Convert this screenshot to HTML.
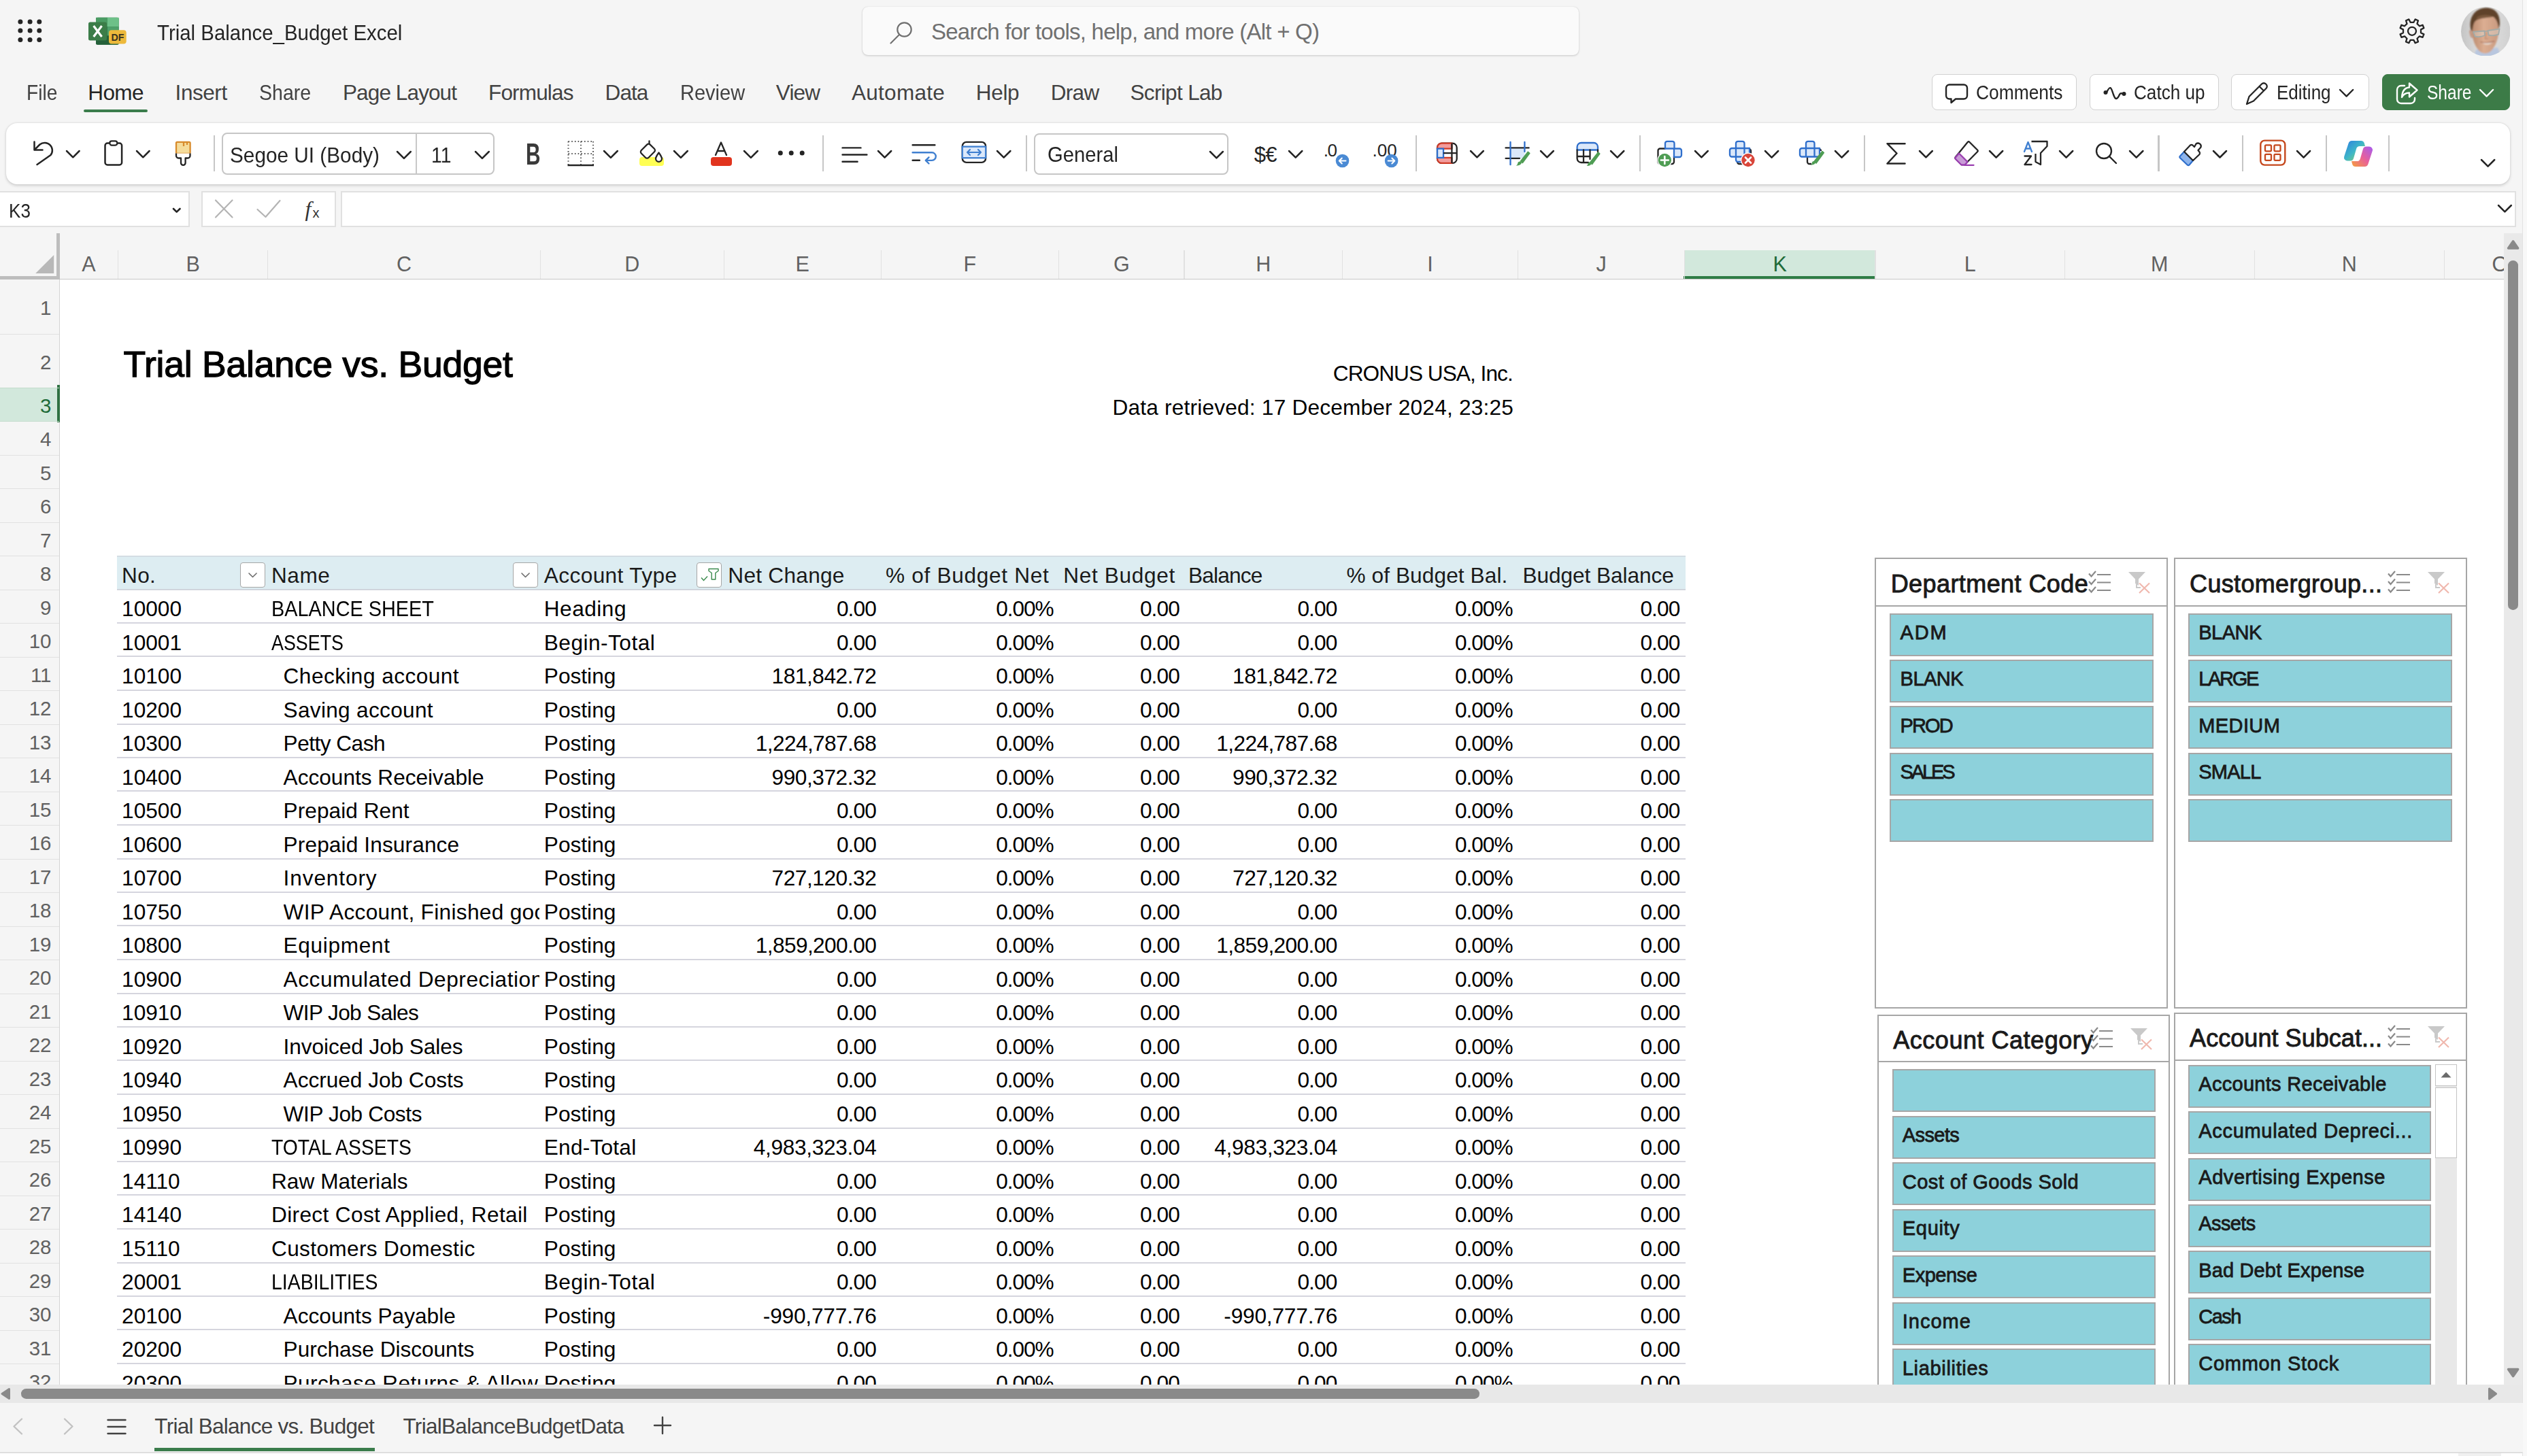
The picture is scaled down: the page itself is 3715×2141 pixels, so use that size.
<!DOCTYPE html>
<html lang="en"><head><meta charset="utf-8"><title>Trial Balance_Budget Excel</title>
<style>
html,body{margin:0;padding:0}
body{width:3715px;height:2141px;overflow:hidden;position:relative;background:#f5f5f5;font-family:"Liberation Sans",sans-serif;color:#242424}
.r{position:absolute;box-sizing:border-box}
.t{position:absolute;white-space:nowrap;color:#242424}
</style></head><body>
<svg class="r" style="left:0.0px;top:0.0px" width="90.0" height="90.0" viewBox="0 0 90.0 90.0"><g fill="#242424"><circle cx="29.9" cy="31.9" r="3.5"/><circle cx="29.9" cy="45.1" r="3.5"/><circle cx="29.9" cy="58.4" r="3.5"/><circle cx="44.1" cy="31.9" r="3.5"/><circle cx="44.1" cy="45.1" r="3.5"/><circle cx="44.1" cy="58.4" r="3.5"/><circle cx="57.8" cy="31.9" r="3.5"/><circle cx="57.8" cy="45.1" r="3.5"/><circle cx="57.8" cy="58.4" r="3.5"/></g></svg>
<svg class="r" style="left:126.0px;top:22.0px" width="64.0" height="48.0" viewBox="0 0 64.0 48.0">
<rect x="15" y="3.8" width="33.7" height="40" rx="2.5" fill="#2f7d4a"/>
<rect x="15" y="3.8" width="17" height="13.5" fill="#4a9b63"/><rect x="32" y="3.8" width="16.7" height="13.5" fill="#6dc088"/>
<rect x="15" y="17.3" width="17" height="13.2" fill="#2f7d4a"/><rect x="32" y="17.3" width="16.7" height="13.2" fill="#4fa06a"/>
<rect x="15" y="30.5" width="33.7" height="13.3" rx="2.5" fill="#25603a"/>
<rect x="4" y="10.6" width="27" height="27" rx="2.5" fill="#3b7d48"/>
<path d="M11.6 16 L23.6 32 M23.6 16 L11.6 32" stroke="#fff" stroke-width="3.2" fill="none"/>
<rect x="34" y="22.2" width="25.7" height="20.3" rx="4" fill="#edb93b"/>
<text x="46.9" y="38" font-family="Liberation Sans,sans-serif" font-weight="bold" font-size="14.5" text-anchor="middle" fill="#3a3320" textLength="19" lengthAdjust="spacingAndGlyphs">DF</text>
</svg>
<div class="t" style="left:231.4px;top:27.8px;font-size:32px;line-height:40px;transform:scaleX(0.9195);transform-origin:0 0;">Trial Balance_Budget Excel</div>
<div class="r" style="left:1268.0px;top:9.8px;width:1053.0px;height:71.7px;background:#fafafa;border-radius:8px;box-shadow:0 1px 3px rgba(0,0,0,.18),0 0 1px rgba(0,0,0,.15);"></div>
<svg class="r" style="left:1306.0px;top:28.0px" width="40.0" height="40.0" viewBox="0 0 40.0 40.0"><circle cx="23.5" cy="15.5" r="10.2" fill="none" stroke="#707070" stroke-width="2.2"/><path d="M16 23 L3.5 35.5" stroke="#707070" stroke-width="2.2" stroke-linecap="round"/></svg>
<div class="t" style="left:1369.0px;top:25.8px;font-size:33px;line-height:42px;letter-spacing:-0.77px;color:#707070;">Search for tools, help, and more (Alt + Q)</div>
<svg class="r" style="left:3520.0px;top:20.0px" width="52.0" height="52.0" viewBox="0 0 52.0 52.0"><path d="M30.6 8.4 L35.0 10.2 L33.5 14.9 L36.9 18.3 L41.6 16.8 L43.4 21.2 L39.0 23.4 L39.0 28.2 L43.4 30.4 L41.6 34.8 L36.9 33.3 L33.5 36.7 L35.0 41.4 L30.6 43.2 L28.4 38.8 L23.6 38.8 L21.4 43.2 L17.0 41.4 L18.5 36.7 L15.1 33.3 L10.4 34.8 L8.6 30.4 L13.0 28.2 L13.0 23.4 L8.6 21.2 L10.4 16.8 L15.1 18.3 L18.5 14.9 L17.0 10.2 L21.4 8.4 L23.6 12.8 L28.4 12.8Z" fill="none" stroke="#242424" stroke-width="2.3" stroke-linejoin="round"/><circle cx="26" cy="25.8" r="6" fill="none" stroke="#242424" stroke-width="2.3"/></svg>
<svg class="r" style="left:3617.8px;top:9.8px" width="72.6" height="72.6" viewBox="0 0 72.6 72.6">
<defs><clipPath id="av"><circle cx="36.3" cy="36.3" r="36.3"/></clipPath>
<linearGradient id="avb" x1="0" x2="1"><stop offset="0" stop-color="#c4c4c4"/><stop offset=".45" stop-color="#e2e2e2"/><stop offset="1" stop-color="#d0d0d0"/></linearGradient>
<linearGradient id="avs" x1="0" x2="1"><stop offset="0" stop-color="#b98a6e"/><stop offset=".45" stop-color="#dcae92"/><stop offset="1" stop-color="#c99a80"/></linearGradient>
<filter id="avf" x="-10%" y="-10%" width="120%" height="120%"><feGaussianBlur stdDeviation="0.9"/></filter></defs>
<g clip-path="url(#av)"><rect width="73" height="73" fill="url(#avb)"/>
<g filter="url(#avf)">
<path d="M18 76 L22 63 L54 60 L60 76Z" fill="#b9c7df"/>
<path d="M13 40 C11.5 35 12.5 33.5 15 34.5 L17 46 C14.5 46 13.5 43 13 40Z" fill="#c3927a"/>
<path d="M15.5 30 C15 18 24 10 36 10.5 C48 11 56 18 55.5 32 C55.5 44 52 58 43 66 C38 70 30 69 26 64 C19 56 16 44 15.5 30Z" fill="url(#avs)"/>
<path d="M14.5 34 C10.5 16 20 2.5 36 1.5 C50 1 58 10 57 26 L55.5 33 C54.5 24 52 17.5 47 14.5 C40 16.5 28 15.5 21 21 C18 24.5 17.5 30 16.5 36Z" fill="#5f422b"/>
<path d="M21 21 C26 14 40 16 47 14.5 C42 11 30 11 24 15Z" fill="#7d5a3d"/>
<path d="M29.5 52 Q38.5 59.5 48 51 Q39 54 29.5 52Z" fill="#f2ebe2"/><path d="M28.5 51.5 Q38.5 55 49 50.5" stroke="#9a5b48" stroke-width="1.1" fill="none"/>
<path d="M37 38 L35.5 47 H40" stroke="#b78469" stroke-width="1.2" fill="none"/>
</g>
<path d="M18 36.8 L34.5 35.5 L35 42 Q27 45.5 20.5 43.5Z M39.5 35 L56.5 32.5 L55 40.5 Q47 43.5 40.5 41.5Z" fill="rgba(225,232,230,.35)" stroke="#a3aaa6" stroke-width="1.9" stroke-linejoin="round"/>
<path d="M34.5 36.5 Q37 35.3 39.5 36" stroke="#a3aaa6" stroke-width="1.6" fill="none"/>
</g></svg>
<div class="t" style="left:39.3px;top:115.8px;font-size:31.5px;line-height:40px;transform:scaleX(0.8927);transform-origin:0 0;color:#424242;">File</div>
<div class="t" style="left:129.3px;top:115.8px;font-size:31.5px;line-height:40px;letter-spacing:-0.61px;">Home</div>
<div class="t" style="left:257.6px;top:115.8px;font-size:31.5px;line-height:40px;letter-spacing:-0.44px;color:#424242;">Insert</div>
<div class="t" style="left:380.8px;top:115.8px;font-size:31.5px;line-height:40px;transform:scaleX(0.9067);transform-origin:0 0;color:#424242;">Share</div>
<div class="t" style="left:504.0px;top:115.8px;font-size:31.5px;line-height:40px;letter-spacing:-0.89px;color:#424242;">Page Layout</div>
<div class="t" style="left:718.0px;top:115.8px;font-size:31.5px;line-height:40px;letter-spacing:-0.83px;color:#424242;">Formulas</div>
<div class="t" style="left:889.6px;top:115.8px;font-size:31.5px;line-height:40px;letter-spacing:-0.92px;color:#424242;">Data</div>
<div class="t" style="left:999.5px;top:115.8px;font-size:31.5px;line-height:40px;transform:scaleX(0.9208);transform-origin:0 0;color:#424242;">Review</div>
<div class="t" style="left:1140.8px;top:115.8px;font-size:31.5px;line-height:40px;letter-spacing:-0.86px;color:#424242;">View</div>
<div class="t" style="left:1252.0px;top:115.8px;font-size:31.5px;line-height:40px;letter-spacing:0.27px;color:#424242;">Automate</div>
<div class="t" style="left:1434.8px;top:115.8px;font-size:31.5px;line-height:40px;letter-spacing:-0.33px;color:#424242;">Help</div>
<div class="t" style="left:1544.7px;top:115.8px;font-size:31.5px;line-height:40px;letter-spacing:-0.66px;color:#424242;">Draw</div>
<div class="t" style="left:1661.5px;top:115.8px;font-size:31.5px;line-height:40px;letter-spacing:-0.66px;color:#424242;">Script Lab</div>
<div class="r" style="left:123.2px;top:161.2px;width:93.7px;height:3.9px;background:#3a7c4b;border-radius:2px;"></div>
<div class="r" style="left:2839.5px;top:109.2px;width:213.2px;height:53.1px;background:#fff;border:1.6px solid #d1d1d1;border-radius:8px;"></div>
<div class="r" style="left:3071.5px;top:109.2px;width:190.1px;height:53.1px;background:#fff;border:1.6px solid #d1d1d1;border-radius:8px;"></div>
<div class="r" style="left:3280.4px;top:109.2px;width:203.0px;height:53.1px;background:#fff;border:1.6px solid #d1d1d1;border-radius:8px;"></div>
<div class="r" style="left:3501.8px;top:109.2px;width:188.4px;height:53.1px;background:#3c7b47;border:1.6px solid #3c7b47;border-radius:8px;"></div>
<svg class="r" style="left:2858.0px;top:120.0px" width="40.0" height="36.0" viewBox="0 0 40.0 36.0"><path d="M8 4.5 H29 a5 5 0 0 1 5 5 V20.5 a5 5 0 0 1 -5 5 H17 L10.5 31 V25.5 H8 a5 5 0 0 1 -5 -5 V9.5 a5 5 0 0 1 5 -5Z" fill="none" stroke="#242424" stroke-width="2.4" stroke-linejoin="round"/></svg>
<div class="t" style="left:2905.0px;top:116.8px;font-size:30px;line-height:38px;transform:scaleX(0.8790);transform-origin:0 0;">Comments</div>
<svg class="r" style="left:3090.0px;top:122.0px" width="40.0" height="30.0" viewBox="0 0 40.0 30.0"><circle cx="5.5" cy="14" r="3" fill="#242424"/><circle cx="32.5" cy="16" r="3" fill="#242424"/><path d="M7 14 C13 1 14 9 17 17 C20 26 23 24 26 17 C27.5 14 30 15.5 31.5 16" fill="none" stroke="#242424" stroke-width="2.4" stroke-linecap="round"/></svg>
<div class="t" style="left:3137.0px;top:116.8px;font-size:30px;line-height:38px;transform:scaleX(0.8704);transform-origin:0 0;">Catch up</div>
<svg class="r" style="left:3299.0px;top:118.0px" width="40.0" height="40.0" viewBox="0 0 40.0 40.0"><path d="M4 35 L7.5 24 L26 5.5 a4.2 4.2 0 0 1 6 0 l0.5 0.5 a4.2 4.2 0 0 1 0 6 L14 30.5 Z M22.5 9 L29 15.5" fill="none" stroke="#242424" stroke-width="2.3" stroke-linejoin="round" stroke-linecap="round"/></svg>
<div class="t" style="left:3346.7px;top:116.8px;font-size:30px;line-height:38px;transform:scaleX(0.8677);transform-origin:0 0;">Editing</div>
<svg class="r" style="left:3437.1px;top:129.3px" width="25.2" height="15.6" viewBox="0 0 25.2 15.6"><path d="M3 3 L12.6 12.6 L22.2 3" fill="none" stroke="#242424" stroke-width="2.4" stroke-linecap="round" stroke-linejoin="round"/></svg>
<svg class="r" style="left:3520.0px;top:118.0px" width="40.0" height="40.0" viewBox="0 0 40.0 40.0"><path d="M15 8 H10 a6 6 0 0 0 -6 6 V28 a6 6 0 0 0 6 6 H24 a6 6 0 0 0 6 -6 V26" fill="none" stroke="#fff" stroke-width="2.4" stroke-linecap="round"/><path d="M22 4.5 L33.5 14.5 L22 24.5 V18.5 C16 18.5 13 21 11 25 C11.5 17 15 11 22 10.5Z" fill="none" stroke="#fff" stroke-width="2.4" stroke-linejoin="round"/></svg>
<div class="t" style="left:3568.0px;top:116.8px;font-size:30px;line-height:38px;transform:scaleX(0.8183);transform-origin:0 0;color:#fff;">Share</div>
<svg class="r" style="left:3643.3px;top:129.3px" width="25.1" height="15.6" viewBox="0 0 25.1 15.6"><path d="M3 3 L12.6 12.6 L22.1 3" fill="none" stroke="#fff" stroke-width="2.4" stroke-linecap="round" stroke-linejoin="round"/></svg>
<div class="r" style="left:9.3px;top:181.2px;width:3681.0px;height:89.6px;background:#fff;border-radius:16px;box-shadow:0 1.5px 4px rgba(0,0,0,.16),0 0 2px rgba(0,0,0,.10);"></div>
<div class="r" style="left:314.0px;top:199.4px;width:2.4px;height:53.0px;background:#c6c6c6;"></div>
<div class="r" style="left:1208.6px;top:199.4px;width:2.4px;height:53.0px;background:#c6c6c6;"></div>
<div class="r" style="left:1507.8px;top:199.4px;width:2.4px;height:53.0px;background:#c6c6c6;"></div>
<div class="r" style="left:2080.8px;top:199.4px;width:2.4px;height:53.0px;background:#c6c6c6;"></div>
<div class="r" style="left:2409.5px;top:199.4px;width:2.4px;height:53.0px;background:#c6c6c6;"></div>
<div class="r" style="left:2740.1px;top:199.4px;width:2.4px;height:53.0px;background:#c6c6c6;"></div>
<div class="r" style="left:3172.3px;top:199.4px;width:2.4px;height:53.0px;background:#c6c6c6;"></div>
<div class="r" style="left:3295.8px;top:199.4px;width:2.4px;height:53.0px;background:#c6c6c6;"></div>
<div class="r" style="left:3418.8px;top:199.4px;width:2.4px;height:53.0px;background:#c6c6c6;"></div>
<div class="r" style="left:3510.8px;top:199.4px;width:2.4px;height:53.0px;background:#c6c6c6;"></div>
<svg class="r" style="left:95.1px;top:218.9px" width="24.6" height="15.3" viewBox="0 0 24.6 15.3"><path d="M3 3 L12.3 12.3 L21.6 3" fill="none" stroke="#242424" stroke-width="2.5" stroke-linecap="round" stroke-linejoin="round"/></svg>
<svg class="r" style="left:198.1px;top:218.9px" width="24.6" height="15.3" viewBox="0 0 24.6 15.3"><path d="M3 3 L12.3 12.3 L21.6 3" fill="none" stroke="#242424" stroke-width="2.5" stroke-linecap="round" stroke-linejoin="round"/></svg>
<svg class="r" style="left:885.1px;top:218.7px" width="25.8" height="15.9" viewBox="0 0 25.8 15.9"><path d="M3 3 L12.9 12.9 L22.8 3" fill="none" stroke="#242424" stroke-width="2.5" stroke-linecap="round" stroke-linejoin="round"/></svg>
<svg class="r" style="left:988.1px;top:218.7px" width="25.8" height="15.9" viewBox="0 0 25.8 15.9"><path d="M3 3 L12.9 12.9 L22.8 3" fill="none" stroke="#242424" stroke-width="2.5" stroke-linecap="round" stroke-linejoin="round"/></svg>
<svg class="r" style="left:1091.1px;top:218.6px" width="25.8" height="15.9" viewBox="0 0 25.8 15.9"><path d="M3 3 L12.9 12.9 L22.8 3" fill="none" stroke="#242424" stroke-width="2.5" stroke-linecap="round" stroke-linejoin="round"/></svg>
<svg class="r" style="left:1287.7px;top:218.8px" width="25.2" height="15.6" viewBox="0 0 25.2 15.6"><path d="M3 3 L12.6 12.6 L22.2 3" fill="none" stroke="#242424" stroke-width="2.5" stroke-linecap="round" stroke-linejoin="round"/></svg>
<svg class="r" style="left:1462.8px;top:218.7px" width="25.4" height="15.7" viewBox="0 0 25.4 15.7"><path d="M3 3 L12.7 12.7 L22.4 3" fill="none" stroke="#242424" stroke-width="2.5" stroke-linecap="round" stroke-linejoin="round"/></svg>
<svg class="r" style="left:1892.1px;top:218.8px" width="25.3" height="15.7" viewBox="0 0 25.3 15.7"><path d="M3 3 L12.7 12.7 L22.3 3" fill="none" stroke="#242424" stroke-width="2.5" stroke-linecap="round" stroke-linejoin="round"/></svg>
<svg class="r" style="left:2159.1px;top:218.9px" width="24.8" height="15.4" viewBox="0 0 24.8 15.4"><path d="M3 3 L12.4 12.4 L21.8 3" fill="none" stroke="#242424" stroke-width="2.5" stroke-linecap="round" stroke-linejoin="round"/></svg>
<svg class="r" style="left:2262.1px;top:218.9px" width="24.8" height="15.4" viewBox="0 0 24.8 15.4"><path d="M3 3 L12.4 12.4 L21.8 3" fill="none" stroke="#242424" stroke-width="2.5" stroke-linecap="round" stroke-linejoin="round"/></svg>
<svg class="r" style="left:2364.6px;top:218.8px" width="25.3" height="15.7" viewBox="0 0 25.3 15.7"><path d="M3 3 L12.7 12.7 L22.3 3" fill="none" stroke="#242424" stroke-width="2.5" stroke-linecap="round" stroke-linejoin="round"/></svg>
<svg class="r" style="left:2489.1px;top:218.9px" width="24.8" height="15.4" viewBox="0 0 24.8 15.4"><path d="M3 3 L12.4 12.4 L21.8 3" fill="none" stroke="#242424" stroke-width="2.5" stroke-linecap="round" stroke-linejoin="round"/></svg>
<svg class="r" style="left:2591.7px;top:218.8px" width="25.2" height="15.6" viewBox="0 0 25.2 15.6"><path d="M3 3 L12.6 12.6 L22.2 3" fill="none" stroke="#242424" stroke-width="2.5" stroke-linecap="round" stroke-linejoin="round"/></svg>
<svg class="r" style="left:2694.7px;top:218.8px" width="25.2" height="15.6" viewBox="0 0 25.2 15.6"><path d="M3 3 L12.6 12.6 L22.2 3" fill="none" stroke="#242424" stroke-width="2.5" stroke-linecap="round" stroke-linejoin="round"/></svg>
<svg class="r" style="left:2819.1px;top:218.9px" width="24.8" height="15.4" viewBox="0 0 24.8 15.4"><path d="M3 3 L12.4 12.4 L21.8 3" fill="none" stroke="#242424" stroke-width="2.5" stroke-linecap="round" stroke-linejoin="round"/></svg>
<svg class="r" style="left:2921.7px;top:218.8px" width="25.2" height="15.6" viewBox="0 0 25.2 15.6"><path d="M3 3 L12.6 12.6 L22.2 3" fill="none" stroke="#242424" stroke-width="2.5" stroke-linecap="round" stroke-linejoin="round"/></svg>
<svg class="r" style="left:3024.7px;top:218.8px" width="25.2" height="15.6" viewBox="0 0 25.2 15.6"><path d="M3 3 L12.6 12.6 L22.2 3" fill="none" stroke="#242424" stroke-width="2.5" stroke-linecap="round" stroke-linejoin="round"/></svg>
<svg class="r" style="left:3127.9px;top:218.7px" width="25.4" height="15.7" viewBox="0 0 25.4 15.7"><path d="M3 3 L12.7 12.7 L22.4 3" fill="none" stroke="#242424" stroke-width="2.5" stroke-linecap="round" stroke-linejoin="round"/></svg>
<svg class="r" style="left:3250.9px;top:218.8px" width="25.0" height="15.5" viewBox="0 0 25.0 15.5"><path d="M3 3 L12.5 12.5 L22.0 3" fill="none" stroke="#242424" stroke-width="2.5" stroke-linecap="round" stroke-linejoin="round"/></svg>
<svg class="r" style="left:3374.1px;top:218.8px" width="25.1" height="15.6" viewBox="0 0 25.1 15.6"><path d="M3 3 L12.6 12.6 L22.1 3" fill="none" stroke="#242424" stroke-width="2.5" stroke-linecap="round" stroke-linejoin="round"/></svg>
<svg class="r" style="left:3645.1px;top:232.3px" width="25.2" height="15.6" viewBox="0 0 25.2 15.6"><path d="M3 3 L12.6 12.6 L22.2 3" fill="none" stroke="#242424" stroke-width="2.5" stroke-linecap="round" stroke-linejoin="round"/></svg>
<svg class="r" style="left:44.0px;top:203.0px" width="40.0" height="44.0" viewBox="0 0 40.0 44.0"><path d="M6.5 5.5 V17.5 H18.5" fill="none" stroke="#242424" stroke-width="2.5" stroke-linecap="round" stroke-linejoin="round"/><path d="M7 17 L14.5 9.5 a11.2 11.2 0 0 1 16 15.5 L10.5 39" fill="none" stroke="#242424" stroke-width="2.5" stroke-linecap="round" stroke-linejoin="round"/></svg>
<svg class="r" style="left:150.0px;top:204.0px" width="34.0" height="42.0" viewBox="0 0 34.0 42.0"><rect x="4.5" y="6.5" width="24.6" height="32" rx="3.5" fill="none" stroke="#242424" stroke-width="2.5"/><rect x="11.3" y="3.4" width="11" height="6.2" rx="3" fill="#fff" stroke="#242424" stroke-width="2.2"/></svg>
<svg class="r" style="left:255.0px;top:205.0px" width="30.0" height="42.0" viewBox="0 0 30.0 42.0"><rect x="4" y="3.8" width="20.6" height="17" rx="1.5" fill="#f5dc9b" stroke="#d88b2c" stroke-width="2.3"/><path d="M15 4 V10 M20 4 V8" stroke="#d88b2c" stroke-width="2.3"/><path d="M4 20.5 V24 a3.5 3.5 0 0 0 3.5 3.5 H11 V34.5 a3.3 3.3 0 0 0 6.6 0 V27.5 H21 a3.5 3.5 0 0 0 3.5 -3.5 V20.5" fill="#fff" stroke="#242424" stroke-width="2.3" stroke-linejoin="round"/></svg>
<div class="r" style="left:326.3px;top:195.2px;width:401.0px;height:62.0px;background:#fff;border:2px solid #c6c6c6;border-radius:8px;"></div>
<div class="r" style="left:610.8px;top:196.0px;width:1.8px;height:60.4px;background:#c8c8c8;"></div>
<div class="t" style="left:338.0px;top:207.8px;font-size:32px;line-height:40px;transform:scaleX(0.9299);transform-origin:0 0;">Segoe UI (Body)</div>
<svg class="r" style="left:581.1px;top:220.2px" width="25.8" height="15.9" viewBox="0 0 25.8 15.9"><path d="M3 3 L12.9 12.9 L22.8 3" fill="none" stroke="#242424" stroke-width="2.5" stroke-linecap="round" stroke-linejoin="round"/></svg>
<div class="t" style="left:634.0px;top:207.8px;font-size:32px;line-height:40px;transform:scaleX(0.8851);transform-origin:0 0;">11</div>
<svg class="r" style="left:696.1px;top:220.2px" width="25.8" height="15.9" viewBox="0 0 25.8 15.9"><path d="M3 3 L12.9 12.9 L22.8 3" fill="none" stroke="#242424" stroke-width="2.5" stroke-linecap="round" stroke-linejoin="round"/></svg>
<div class="t" style="left:773.0px;top:199.3px;font-size:44.5px;line-height:56px;transform:scaleX(0.6692);transform-origin:0 0;color:#3a3a3a;font-weight:bold;">B</div>
<svg class="r" style="left:832.0px;top:204.0px" width="44.0" height="44.0" viewBox="0 0 44.0 44.0"><g stroke="#555" stroke-width="2" stroke-dasharray="1.6 3.1" fill="none"><path d="M3.5 4 H40.5 M3.5 22 H40.5 M3.5 4 V38 M22 4 V38 M40 4 V38"/></g><path d="M2.5 39 H41" stroke="#242424" stroke-width="2.5"/></svg>
<div class="r" style="left:940.0px;top:231.0px;width:36.0px;height:13.0px;background:#ffff54;border-radius:4px;"></div>
<svg class="r" style="left:938.0px;top:204.0px" width="42.0" height="44.0" viewBox="0 0 42.0 44.0"><path d="M16.5 3.5 V17" stroke="#242424" stroke-width="2.3" stroke-linecap="round" fill="none"/><path d="M13.2 8.6 L4.8 17 a3.2 3.2 0 0 0 0 4.5 L11 27.7 a3.2 3.2 0 0 0 4.5 0 L24 19.3 a3.2 3.2 0 0 0 0 -4.5 L17.7 8.6 a3.2 3.2 0 0 0 -4.5 0Z" fill="#fff" stroke="#242424" stroke-width="2.3" stroke-linejoin="round"/><path d="M30.5 20.5 C28 24 26 27 26 29.3 a4.5 4.5 0 0 0 9 0 C35 27 33 24 30.5 20.5Z" fill="#fff" stroke="#242424" stroke-width="2.3" stroke-linejoin="round"/></svg>
<div class="r" style="left:1044.7px;top:231.0px;width:31.3px;height:13.0px;background:#e1341e;border-radius:4px;"></div>
<svg class="r" style="left:1046.0px;top:205.0px" width="30.0" height="28.0" viewBox="0 0 30.0 28.0"><path d="M6 23 L14 4.5 L22 23 M8.8 17 H19.2" fill="none" stroke="#242424" stroke-width="2.3" stroke-linecap="round" stroke-linejoin="round"/></svg>
<svg class="r" style="left:1140.0px;top:215.0px" width="46.0" height="20.0" viewBox="0 0 46.0 20.0"><g fill="#242424"><circle cx="7.3" cy="10" r="3.5"/><circle cx="23.2" cy="10" r="3.5"/><circle cx="39.2" cy="10" r="3.5"/></g></svg>
<svg class="r" style="left:1236.0px;top:210.0px" width="42.0" height="34.0" viewBox="0 0 42.0 34.0"><path d="M2.5 7.4 H29.5 M2.5 17.5 H38.4 M2.5 27.7 H24.6" stroke="#242424" stroke-width="2.4" stroke-linecap="round" fill="none"/></svg>
<svg class="r" style="left:1339.0px;top:207.0px" width="42.0" height="36.0" viewBox="0 0 42.0 36.0"><path d="M2.6 6.2 H35.4 M2.6 28.8 H12.9" stroke="#242424" stroke-width="2.4" stroke-linecap="round" fill="none"/><path d="M2.6 17.3 H31 a5.8 5.8 0 0 1 0 11.6 H22.5 M26.5 24.3 L21.8 28.9 L26.5 33.5" stroke="#3f7fd0" stroke-width="2.4" stroke-linecap="round" stroke-linejoin="round" fill="none"/></svg>
<svg class="r" style="left:1411.0px;top:205.0px" width="42.0" height="38.0" viewBox="0 0 42.0 38.0"><rect x="3.8" y="3.9" width="34.3" height="30" rx="6" fill="#fff" stroke="#242424" stroke-width="2.4"/><rect x="3.8" y="10.6" width="34.3" height="16.6" fill="#dbe8fa" stroke="#3f7fd0" stroke-width="2.3"/><path d="M11 19 H31 M15 15 L11 19 L15 23 M27 15 L31 19 L27 23" fill="none" stroke="#3f7fd0" stroke-width="2.2" stroke-linecap="round" stroke-linejoin="round"/></svg>
<div class="r" style="left:1520.0px;top:196.0px;width:286.3px;height:61.0px;background:#fff;border:2px solid #c6c6c6;border-radius:8px;"></div>
<div class="t" style="left:1540.0px;top:206.6px;font-size:32px;line-height:40px;transform:scaleX(0.9126);transform-origin:0 0;">General</div>
<svg class="r" style="left:1776.1px;top:220.4px" width="24.8" height="15.4" viewBox="0 0 24.8 15.4"><path d="M3 3 L12.4 12.4 L21.8 3" fill="none" stroke="#242424" stroke-width="2.5" stroke-linecap="round" stroke-linejoin="round"/></svg>
<div class="t" style="left:1843.8px;top:208.3px;font-size:31px;line-height:39px;letter-spacing:-0.87px;">$€</div>
<div class="t" style="left:1945.8px;top:204.9px;font-size:26px;line-height:33px;letter-spacing:-1.48px;">.0</div>
<svg class="r" style="left:1962.0px;top:225.0px" width="24.0" height="24.0" viewBox="0 0 24.0 24.0"><circle cx="11.5" cy="11.5" r="9.8" fill="#4a8ad4"/><path d="M16.5 11.5 H7 M10.8 7.5 L6.8 11.5 L10.8 15.5" fill="none" stroke="#fff" stroke-width="2" stroke-linecap="round" stroke-linejoin="round"/></svg>
<div class="t" style="left:2017.6px;top:204.9px;font-size:26px;line-height:33px;letter-spacing:-0.02px;">.00</div>
<svg class="r" style="left:2034.0px;top:225.0px" width="24.0" height="24.0" viewBox="0 0 24.0 24.0"><circle cx="11.6" cy="11.5" r="9.8" fill="#4a8ad4"/><path d="M6.6 11.5 H16 M12.3 7.5 L16.3 11.5 L12.3 15.5" fill="none" stroke="#fff" stroke-width="2" stroke-linecap="round" stroke-linejoin="round"/></svg>
<svg class="r" style="left:2109.0px;top:206.0px" width="38.0" height="38.0" viewBox="0 0 38.0 38.0"><rect x="4" y="4.6" width="28.7" height="29.3" rx="6.5" fill="#fff" stroke="#242424" stroke-width="2.3"/><path d="M4 12.6 V11.1 a6.5 6.5 0 0 1 6.5 -6.5 H25.4 V12.6Z M4 25.9 H25.4 V33.9 H10.5 a6.5 6.5 0 0 1 -6.5 -6.5Z" fill="#f29c9c" stroke="#cf3a26" stroke-width="2.3" stroke-linejoin="round"/><rect x="4" y="12.6" width="9" height="13.3" fill="#dbe8fa" stroke="#2f6fcc" stroke-width="2.3"/><path d="M25.4 4.6 V33.9 M13 19.2 H32.7" stroke="#242424" stroke-width="2.3" fill="none"/></svg>
<svg class="r" style="left:2210.0px;top:204.0px" width="42.0" height="44.0" viewBox="0 0 42.0 44.0"><rect x="10.5" y="13.4" width="20.9" height="15.4" fill="#dbe8fa"/><path d="M3.5 13.4 H37.6 M3.5 28.8 H24" stroke="#242424" stroke-width="2.3" stroke-linecap="round"/><path d="M10.5 4.8 V38.2 M31.4 4.8 V19" stroke="#2f6fcc" stroke-width="2.3" stroke-linecap="round"/><path d="M25.5 33 L36.3 19.3 L38.8 21.3 L28.3 35.5 Z" fill="#4f9d54" stroke="#4f9d54" stroke-width="1.6" stroke-linejoin="round"/><path d="M18.5 39.5 C21.5 39.8 26.2 39 27 35.3 C25.5 32.5 21.5 33 21.2 36.3 C21.1 37.8 20 39 18.5 39.5Z" fill="#4f9d54"/></svg>
<svg class="r" style="left:2315.0px;top:206.0px" width="40.0" height="42.0" viewBox="0 0 40.0 42.0"><path d="M3.6 14.5 V10 a6 6 0 0 1 6 -6 H28 a6 6 0 0 1 6 6 V14.5Z" fill="#dbe8fa" stroke="#2f6fcc" stroke-width="2.3" stroke-linejoin="round"/><path d="M3.6 14.5 V27 a6 6 0 0 0 6 6 H20 M3.6 24 H22 M13 14.5 V33 M22.5 14.5 V28 M34 14.5 V18" fill="none" stroke="#242424" stroke-width="2.3" stroke-linecap="round"/><path d="M22.5 33 L34.5 18 L36.8 20 L25.5 35.5 Z" fill="#4f9d54" stroke="#4f9d54" stroke-width="1.6" stroke-linejoin="round"/><path d="M17.5 38 C20 38.3 24 37.5 24.5 34 C23 31.5 19.5 32 19.3 35 C19.2 36.5 18.5 37.5 17.5 38Z" fill="#4f9d54"/></svg>
<svg class="r" style="left:2434.0px;top:204.0px" width="46.0" height="46.0" viewBox="0 0 46.0 46.0"><path d="M14.5 14.5 H6.5 a3 3 0 0 0 -3 3 V34 a3 3 0 0 0 3 3 H24 a3 3 0 0 0 3 -3 V26" fill="none" stroke="#242424" stroke-width="2.3"/><path d="M17 3.8 h7.5 a3 3 0 0 1 3 3 V14.5 H35 a3 3 0 0 1 3 3 V24 a3 3 0 0 1 -3 3 H27 V14.5 H14 V6.8 a3 3 0 0 1 3 -3Z" fill="#dbe8fa" stroke="#2f6fcc" stroke-width="2.3" stroke-linejoin="round"/><circle cx="13.3" cy="31.5" r="10.3" fill="#4f9d54" stroke="#fff" stroke-width="1.2"/><path d="M13.3 26 V37 M7.8 31.5 H18.8" stroke="#fff" stroke-width="2.6" stroke-linecap="round"/></svg>
<svg class="r" style="left:2540.0px;top:204.0px" width="46.0" height="46.0" viewBox="0 0 46.0 46.0"><path d="M14 22 V34 a3 3 0 0 0 3 3 H31 a3 3 0 0 0 3 -3 V18 a3 3 0 0 0 -3 -3 H26" fill="none" stroke="#242424" stroke-width="2.3"/><path d="M15 3.8 h6.5 a3 3 0 0 1 3 3 V14 H32 V26.5 H24.5 V34 H15 a3 3 0 0 1 -3 -3 V26.5 H6 a3 3 0 0 1 -3 -3 V17 a3 3 0 0 1 3 -3 H12 V6.8 a3 3 0 0 1 3 -3Z M12 14 H24.5 M12 26.5 H24.5 M12 14 V26.5 M24.5 14 V26.5" fill="#dbe8fa" stroke="#2f6fcc" stroke-width="2.3" stroke-linejoin="round"/><circle cx="30" cy="31.5" r="10.3" fill="#d9463a" stroke="#fff" stroke-width="1.2"/><path d="M26 27.5 L34 35.5 M34 27.5 L26 35.5" stroke="#fff" stroke-width="2.6" stroke-linecap="round"/></svg>
<svg class="r" style="left:2643.0px;top:204.0px" width="44.0" height="46.0" viewBox="0 0 44.0 46.0"><path d="M14 22 V34 a3 3 0 0 0 3 3 H20 M26 15 H31 a3 3 0 0 1 3 3" fill="none" stroke="#242424" stroke-width="2.3"/><path d="M15 3.8 h6.5 a3 3 0 0 1 3 3 V14 H32 V26.5 H24.5 H12 H6 a3 3 0 0 1 -3 -3 V17 a3 3 0 0 1 3 -3 H12 V6.8 a3 3 0 0 1 3 -3Z M12 14 H24.5 M12 14 V26.5 M24.5 14 V26.5" fill="#dbe8fa" stroke="#2f6fcc" stroke-width="2.3" stroke-linejoin="round"/><path d="M24 33.5 L36 18.5 L38.3 20.5 L27 36 Z" fill="#4f9d54" stroke="#4f9d54" stroke-width="1.6" stroke-linejoin="round"/><path d="M19 38.5 C21.5 38.8 25.5 38 26 34.5 C24.5 32 21 32.5 20.8 35.5 C20.7 37 20 38 19 38.5Z" fill="#4f9d54"/></svg>
<svg class="r" style="left:2770.0px;top:206.0px" width="36.0" height="40.0" viewBox="0 0 36.0 40.0"><path d="M30.5 5.2 H4.5 L18.5 19.5 L4.5 34.5 H30.5" fill="none" stroke="#242424" stroke-width="2.5" stroke-linecap="round" stroke-linejoin="round"/></svg>
<svg class="r" style="left:2870.0px;top:204.0px" width="42.0" height="44.0" viewBox="0 0 42.0 44.0"><path d="M25.5 5 L37 16.5 a2 2 0 0 1 0 2.8 L18.5 38 H13.5 L5 29.5 a2 2 0 0 1 0 -2.8 L22.7 5 a2 2 0 0 1 2.8 0Z" fill="#fff" stroke="#242424" stroke-width="2.3" stroke-linejoin="round"/><path d="M10 21.5 L22.5 34 L18.5 38.5 H13.5 L5 30 a2 2 0 0 1 0 -2.8Z" fill="#c89bd6" stroke="#9a3fb0" stroke-width="2.3" stroke-linejoin="round"/><path d="M18.5 38.8 H31.5" stroke="#9a3fb0" stroke-width="2.3" stroke-linecap="round"/></svg>
<svg class="r" style="left:2972.0px;top:204.0px" width="44.0" height="44.0" viewBox="0 0 44.0 44.0"><path d="M14.5 4 H37.5 V11 L28 21 V38 L20.5 34 V22" fill="none" stroke="#242424" stroke-width="2.3" stroke-linejoin="round"/><path d="M4 19 L9.5 5 L15 19 M5.8 14.5 H13.2" fill="none" stroke="#3f7fd0" stroke-width="2.3" stroke-linecap="round" stroke-linejoin="round"/><path d="M4.5 25.5 H14 L4.5 38 H14.5" fill="none" stroke="#242424" stroke-width="2.3" stroke-linecap="round" stroke-linejoin="round"/></svg>
<svg class="r" style="left:3078.0px;top:206.0px" width="38.0" height="40.0" viewBox="0 0 38.0 40.0"><circle cx="15" cy="16" r="11" fill="none" stroke="#242424" stroke-width="2.4"/><path d="M23 24 L33 34" stroke="#242424" stroke-width="2.4" stroke-linecap="round"/></svg>
<svg class="r" style="left:3200.0px;top:205.0px" width="40.0" height="42.0" viewBox="0 0 40.0 42.0"><path d="M5 24.5 L11 18 L24 31 L18.5 37.5 a2 2 0 0 1 -2.8 0 L5 27.2 a2 2 0 0 1 0 -2.7Z" fill="#8db4ec" stroke="#2f6fcc" stroke-width="2.2" stroke-linejoin="round"/><path d="M11 18 L20 8.5 a3 3 0 0 1 3.5 0 L26 11 L28.5 6.5 a4.5 4.5 0 0 1 7 5 L31.5 16 L33.5 18.5 a3 3 0 0 1 0 3.5 L24 31Z" fill="#fff" stroke="#242424" stroke-width="2.3" stroke-linejoin="round"/></svg>
<svg class="r" style="left:3320.0px;top:203.0px" width="44.0" height="44.0" viewBox="0 0 44.0 44.0"><rect x="3.3" y="3.6" width="36" height="36" rx="6" fill="none" stroke="#c5481d" stroke-width="2.4"/><g fill="none" stroke="#c5481d" stroke-width="2.3"><rect x="10" y="10.3" width="9" height="9" rx="1.5"/><rect x="23.5" y="10.3" width="9" height="9" rx="1.5"/><rect x="10" y="23.8" width="9" height="9" rx="1.5"/><rect x="23.5" y="23.8" width="9" height="9" rx="1.5"/></g></svg>
<svg class="r" style="left:3444.0px;top:204.0px" width="46.0" height="44.0" viewBox="0 0 46.0 44.0"><defs><linearGradient id="cp1" x1="0" y1="0" x2="1" y2="1"><stop offset="0" stop-color="#2a7de1"/><stop offset=".5" stop-color="#3fb7c7"/><stop offset="1" stop-color="#a4d64a"/></linearGradient>
<linearGradient id="cp2" x1="1" y1="0" x2="0" y2="1"><stop offset="0" stop-color="#a55cf0"/><stop offset=".5" stop-color="#e8609a"/><stop offset="1" stop-color="#f6a03a"/></linearGradient></defs>
<path d="M14 3 H27 a5 5 0 0 1 4.8 3.5 L33 11 H25 a5 5 0 0 0 -4.8 3.6 L16 29 a5 5 0 0 1 -4.8 3.6 H7 a5 5 0 0 1 -4.8 -6.4 L8.5 7 A5.5 5.5 0 0 1 14 3Z" fill="url(#cp1)"/>
<path d="M32 41 H19 a5 5 0 0 1 -4.8 -3.5 L13 33 H21 a5 5 0 0 0 4.8 -3.6 L30 15 a5 5 0 0 1 4.8 -3.6 H39 a5 5 0 0 1 4.8 6.4 L37.5 37 A5.5 5.5 0 0 1 32 41Z" fill="url(#cp2)"/></svg>
<div class="r" style="left:0.0px;top:281.0px;width:278.5px;height:53.0px;background:#fff;border:2px solid #e0e0e0;border-left:0;"></div>
<div class="r" style="left:295.6px;top:281.0px;width:198.4px;height:53.0px;background:#fff;border:2px solid #e0e0e0;"></div>
<div class="r" style="left:501.2px;top:281.0px;width:3197.6px;height:53.0px;background:#fff;border:2px solid #e0e0e0;"></div>
<div class="t" style="left:12.8px;top:290.9px;font-size:29.5px;line-height:37px;transform:scaleX(0.8842);transform-origin:0 0;">K3</div>
<svg class="r" style="left:252.1px;top:304.2px" width="15.5" height="10.7" viewBox="0 0 15.5 10.7"><path d="M3 3 L7.7 7.7 L12.5 3" fill="none" stroke="#242424" stroke-width="2.6" stroke-linecap="round" stroke-linejoin="round"/></svg>
<svg class="r" style="left:312.0px;top:290.0px" width="34.0" height="34.0" viewBox="0 0 34.0 34.0"><path d="M5 4.5 L29.5 29.5 M29.5 4.5 L5 29.5" stroke="#b4b4b4" stroke-width="2.2" stroke-linecap="round"/></svg>
<svg class="r" style="left:374.0px;top:290.0px" width="42.0" height="34.0" viewBox="0 0 42.0 34.0"><path d="M4.5 18 L16.5 29 L37.5 5" fill="none" stroke="#b4b4b4" stroke-width="2.2" stroke-linecap="round" stroke-linejoin="round"/></svg>
<div class="t" style="left:448.5px;top:289px;font-family:'Liberation Serif',serif;font-style:italic;font-size:32px;line-height:36px;color:#333">f</div>
<div class="t" style="left:459.5px;top:301px;font-size:20px;line-height:24px;color:#333">x</div>
<svg class="r" style="left:3670.1px;top:299.4px" width="24.8" height="15.4" viewBox="0 0 24.8 15.4"><path d="M3 3 L12.4 12.4 L21.8 3" fill="none" stroke="#242424" stroke-width="2.5" stroke-linecap="round" stroke-linejoin="round"/></svg>
<div class="r" style="left:87.3px;top:410.5px;width:3593.7px;height:1625.5px;background:#fff;"></div>
<div class="r" style="left:2476.5px;top:367.5px;width:280.5px;height:43.0px;background:#d2e8dc;"></div>
<div class="r" style="left:2474.5px;top:406.0px;width:283.3px;height:4.6px;background:#2f7d46;"></div>
<div class="t" style="left:120.3px;top:369.1px;font-size:30.5px;line-height:39px;color:#616161;">A</div>
<div class="r" style="left:172.9px;top:368.0px;width:1.4px;height:42.0px;background:#e1e1e1;"></div>
<div class="t" style="left:273.4px;top:369.1px;font-size:30.5px;line-height:39px;color:#616161;">B</div>
<div class="r" style="left:392.8px;top:368.0px;width:1.4px;height:42.0px;background:#e1e1e1;"></div>
<div class="t" style="left:582.9px;top:369.1px;font-size:30.5px;line-height:39px;color:#616161;">C</div>
<div class="r" style="left:793.6px;top:368.0px;width:1.4px;height:42.0px;background:#e1e1e1;"></div>
<div class="t" style="left:918.2px;top:369.1px;font-size:30.5px;line-height:39px;color:#616161;">D</div>
<div class="r" style="left:1063.5px;top:368.0px;width:1.4px;height:42.0px;background:#e1e1e1;"></div>
<div class="t" style="left:1169.6px;top:369.1px;font-size:30.5px;line-height:39px;color:#616161;">E</div>
<div class="r" style="left:1294.7px;top:368.0px;width:1.4px;height:42.0px;background:#e1e1e1;"></div>
<div class="t" style="left:1416.6px;top:369.1px;font-size:30.5px;line-height:39px;color:#616161;">F</div>
<div class="r" style="left:1555.8px;top:368.0px;width:1.4px;height:42.0px;background:#e1e1e1;"></div>
<div class="t" style="left:1636.9px;top:369.1px;font-size:30.5px;line-height:39px;color:#616161;">G</div>
<div class="r" style="left:1740.3px;top:368.0px;width:1.4px;height:42.0px;background:#e1e1e1;"></div>
<div class="t" style="left:1846.2px;top:369.1px;font-size:30.5px;line-height:39px;color:#616161;">H</div>
<div class="r" style="left:1972.8px;top:368.0px;width:1.4px;height:42.0px;background:#e1e1e1;"></div>
<div class="t" style="left:2098.3px;top:369.1px;font-size:30.5px;line-height:39px;color:#616161;">I</div>
<div class="r" style="left:2230.9px;top:368.0px;width:1.4px;height:42.0px;background:#e1e1e1;"></div>
<div class="t" style="left:2346.4px;top:369.1px;font-size:30.5px;line-height:39px;color:#616161;">J</div>
<div class="r" style="left:2475.8px;top:368.0px;width:1.4px;height:42.0px;background:#e1e1e1;"></div>
<div class="t" style="left:2606.6px;top:369.1px;font-size:30.5px;line-height:39px;color:#1f6b38;">K</div>
<div class="r" style="left:2756.3px;top:368.0px;width:1.4px;height:42.0px;background:#e1e1e1;"></div>
<div class="t" style="left:2887.7px;top:369.1px;font-size:30.5px;line-height:39px;color:#616161;">L</div>
<div class="r" style="left:3034.6px;top:368.0px;width:1.4px;height:42.0px;background:#e1e1e1;"></div>
<div class="t" style="left:3162.1px;top:369.1px;font-size:30.5px;line-height:39px;color:#616161;">M</div>
<div class="r" style="left:3313.7px;top:368.0px;width:1.4px;height:42.0px;background:#e1e1e1;"></div>
<div class="t" style="left:3442.8px;top:369.1px;font-size:30.5px;line-height:39px;color:#616161;">N</div>
<div class="r" style="left:3592.5px;top:368.0px;width:1.4px;height:42.0px;background:#e1e1e1;"></div>
<div class="t" style="left:3663.4px;top:369.1px;font-size:30.5px;line-height:39px;color:#616161;">O</div>
<div class="r" style="left:87.3px;top:409.8px;width:3593.7px;height:1.4px;background:#c8c8c8;"></div>
<div class="r" style="left:83.0px;top:343.2px;width:4.8px;height:67.4px;background:#bdbdbd;"></div>
<div class="r" style="left:0.0px;top:405.6px;width:87.8px;height:5.0px;background:#bdbdbd;"></div>
<svg class="r" style="left:50.0px;top:373.0px" width="32.0" height="32.0" viewBox="0 0 32.0 32.0"><path d="M29.2 2.1 V29 H2.2Z" fill="#b8b8b8"/></svg>
<div class="r" style="left:0.0px;top:570.3px;width:87.3px;height:49.6px;background:#d2e8dc;"></div>
<div class="r" style="left:86.8px;top:410.5px;width:1.2px;height:1625.5px;background:#d4d4d4;"></div>
<div class="r" style="left:84.1px;top:566.0px;width:3.8px;height:54.8px;background:#2f7142;"></div>
<div class="r" style="left:0.0px;top:490.7px;width:87.0px;height:1.4px;background:#e1e1e1;"></div>
<div class="t" style="left:59.1px;top:433.8px;font-size:29.5px;line-height:37px;color:#616161;">1</div>
<div class="r" style="left:0.0px;top:569.6px;width:87.0px;height:1.4px;background:#c3dccb;"></div>
<div class="t" style="left:59.1px;top:513.7px;font-size:29.5px;line-height:37px;color:#616161;">2</div>
<div class="r" style="left:0.0px;top:619.1px;width:87.0px;height:1.4px;background:#c3dccb;"></div>
<div class="t" style="left:59.1px;top:577.9px;font-size:29.5px;line-height:37px;color:#1f6b38;">3</div>
<div class="r" style="left:0.0px;top:668.6px;width:87.0px;height:1.4px;background:#e1e1e1;"></div>
<div class="t" style="left:59.1px;top:627.4px;font-size:29.5px;line-height:37px;color:#616161;">4</div>
<div class="r" style="left:0.0px;top:718.1px;width:87.0px;height:1.4px;background:#e1e1e1;"></div>
<div class="t" style="left:59.1px;top:676.9px;font-size:29.5px;line-height:37px;color:#616161;">5</div>
<div class="r" style="left:0.0px;top:767.6px;width:87.0px;height:1.4px;background:#e1e1e1;"></div>
<div class="t" style="left:59.1px;top:726.4px;font-size:29.5px;line-height:37px;color:#616161;">6</div>
<div class="r" style="left:0.0px;top:817.1px;width:87.0px;height:1.4px;background:#e1e1e1;"></div>
<div class="t" style="left:59.1px;top:775.9px;font-size:29.5px;line-height:37px;color:#616161;">7</div>
<div class="r" style="left:0.0px;top:866.6px;width:87.0px;height:1.4px;background:#e1e1e1;"></div>
<div class="t" style="left:59.1px;top:825.4px;font-size:29.5px;line-height:37px;color:#616161;">8</div>
<div class="r" style="left:0.0px;top:916.1px;width:87.0px;height:1.4px;background:#e1e1e1;"></div>
<div class="t" style="left:59.1px;top:874.9px;font-size:29.5px;line-height:37px;color:#616161;">9</div>
<div class="r" style="left:0.0px;top:965.6px;width:87.0px;height:1.4px;background:#e1e1e1;"></div>
<div class="t" style="left:42.7px;top:924.4px;font-size:29.5px;line-height:37px;color:#616161;">10</div>
<div class="r" style="left:0.0px;top:1015.1px;width:87.0px;height:1.4px;background:#e1e1e1;"></div>
<div class="t" style="left:44.9px;top:973.9px;font-size:29.5px;line-height:37px;color:#616161;">11</div>
<div class="r" style="left:0.0px;top:1064.6px;width:87.0px;height:1.4px;background:#e1e1e1;"></div>
<div class="t" style="left:42.7px;top:1023.4px;font-size:29.5px;line-height:37px;color:#616161;">12</div>
<div class="r" style="left:0.0px;top:1114.1px;width:87.0px;height:1.4px;background:#e1e1e1;"></div>
<div class="t" style="left:42.7px;top:1072.9px;font-size:29.5px;line-height:37px;color:#616161;">13</div>
<div class="r" style="left:0.0px;top:1163.6px;width:87.0px;height:1.4px;background:#e1e1e1;"></div>
<div class="t" style="left:42.7px;top:1122.4px;font-size:29.5px;line-height:37px;color:#616161;">14</div>
<div class="r" style="left:0.0px;top:1213.1px;width:87.0px;height:1.4px;background:#e1e1e1;"></div>
<div class="t" style="left:42.7px;top:1171.9px;font-size:29.5px;line-height:37px;color:#616161;">15</div>
<div class="r" style="left:0.0px;top:1262.6px;width:87.0px;height:1.4px;background:#e1e1e1;"></div>
<div class="t" style="left:42.7px;top:1221.4px;font-size:29.5px;line-height:37px;color:#616161;">16</div>
<div class="r" style="left:0.0px;top:1312.1px;width:87.0px;height:1.4px;background:#e1e1e1;"></div>
<div class="t" style="left:42.7px;top:1270.9px;font-size:29.5px;line-height:37px;color:#616161;">17</div>
<div class="r" style="left:0.0px;top:1361.6px;width:87.0px;height:1.4px;background:#e1e1e1;"></div>
<div class="t" style="left:42.7px;top:1320.4px;font-size:29.5px;line-height:37px;color:#616161;">18</div>
<div class="r" style="left:0.0px;top:1411.1px;width:87.0px;height:1.4px;background:#e1e1e1;"></div>
<div class="t" style="left:42.7px;top:1369.9px;font-size:29.5px;line-height:37px;color:#616161;">19</div>
<div class="r" style="left:0.0px;top:1460.6px;width:87.0px;height:1.4px;background:#e1e1e1;"></div>
<div class="t" style="left:42.7px;top:1419.4px;font-size:29.5px;line-height:37px;color:#616161;">20</div>
<div class="r" style="left:0.0px;top:1510.1px;width:87.0px;height:1.4px;background:#e1e1e1;"></div>
<div class="t" style="left:42.7px;top:1468.9px;font-size:29.5px;line-height:37px;color:#616161;">21</div>
<div class="r" style="left:0.0px;top:1559.6px;width:87.0px;height:1.4px;background:#e1e1e1;"></div>
<div class="t" style="left:42.7px;top:1518.4px;font-size:29.5px;line-height:37px;color:#616161;">22</div>
<div class="r" style="left:0.0px;top:1609.1px;width:87.0px;height:1.4px;background:#e1e1e1;"></div>
<div class="t" style="left:42.7px;top:1567.9px;font-size:29.5px;line-height:37px;color:#616161;">23</div>
<div class="r" style="left:0.0px;top:1658.6px;width:87.0px;height:1.4px;background:#e1e1e1;"></div>
<div class="t" style="left:42.7px;top:1617.4px;font-size:29.5px;line-height:37px;color:#616161;">24</div>
<div class="r" style="left:0.0px;top:1708.1px;width:87.0px;height:1.4px;background:#e1e1e1;"></div>
<div class="t" style="left:42.7px;top:1666.9px;font-size:29.5px;line-height:37px;color:#616161;">25</div>
<div class="r" style="left:0.0px;top:1757.6px;width:87.0px;height:1.4px;background:#e1e1e1;"></div>
<div class="t" style="left:42.7px;top:1716.4px;font-size:29.5px;line-height:37px;color:#616161;">26</div>
<div class="r" style="left:0.0px;top:1807.1px;width:87.0px;height:1.4px;background:#e1e1e1;"></div>
<div class="t" style="left:42.7px;top:1765.9px;font-size:29.5px;line-height:37px;color:#616161;">27</div>
<div class="r" style="left:0.0px;top:1856.6px;width:87.0px;height:1.4px;background:#e1e1e1;"></div>
<div class="t" style="left:42.7px;top:1815.4px;font-size:29.5px;line-height:37px;color:#616161;">28</div>
<div class="r" style="left:0.0px;top:1906.1px;width:87.0px;height:1.4px;background:#e1e1e1;"></div>
<div class="t" style="left:42.7px;top:1864.9px;font-size:29.5px;line-height:37px;color:#616161;">29</div>
<div class="r" style="left:0.0px;top:1955.6px;width:87.0px;height:1.4px;background:#e1e1e1;"></div>
<div class="t" style="left:42.7px;top:1914.4px;font-size:29.5px;line-height:37px;color:#616161;">30</div>
<div class="r" style="left:0.0px;top:2005.1px;width:87.0px;height:1.4px;background:#e1e1e1;"></div>
<div class="t" style="left:42.7px;top:1963.9px;font-size:29.5px;line-height:37px;color:#616161;">31</div>
<div class="t" style="left:42.7px;top:2013.4px;font-size:29.5px;line-height:37px;color:#616161;">32</div>
<div class="t" style="left:181.6px;top:502.4px;font-size:53.5px;line-height:67px;letter-spacing:-0.24px;color:#000;-webkit-text-stroke:1.25px #000;">Trial Balance vs. Budget</div>
<div class="t" style="left:1959.8px;top:528.9px;font-size:31.6px;line-height:40px;letter-spacing:-0.95px;color:#000;">CRONUS USA, Inc.</div>
<div class="t" style="left:1635.5px;top:579.0px;font-size:31.6px;line-height:40px;letter-spacing:0.21px;color:#000;">Data retrieved: 17 December 2024, 23:25</div>
<div class="r" style="left:172.0px;top:816.6px;width:2306.0px;height:51.0px;background:#ddedf2;"></div>
<div class="r" style="left:172.0px;top:816.6px;width:2306.0px;height:2.4px;background:#d3dde3;"></div>
<div class="r" style="left:172.0px;top:865.8px;width:2306.0px;height:2.4px;background:#d0d5dc;"></div>
<div class="t" style="left:179.1px;top:825.9px;font-size:31.6px;line-height:40px;letter-spacing:0.22px;color:#1a1a1a;">No.</div>
<div class="t" style="left:399.0px;top:825.9px;font-size:31.6px;line-height:40px;letter-spacing:0.53px;color:#1a1a1a;">Name</div>
<div class="t" style="left:799.8px;top:825.9px;font-size:31.6px;line-height:40px;letter-spacing:0.40px;color:#1a1a1a;">Account Type</div>
<div class="t" style="left:1070.3px;top:825.9px;font-size:31.6px;line-height:40px;letter-spacing:0.28px;color:#1a1a1a;">Net Change</div>
<div class="t" style="left:1302.0px;top:825.9px;font-size:31.6px;line-height:40px;letter-spacing:0.69px;color:#1a1a1a;">% of Budget Net</div>
<div class="t" style="left:1563.2px;top:825.9px;font-size:31.6px;line-height:40px;letter-spacing:0.68px;color:#1a1a1a;">Net Budget</div>
<div class="t" style="left:1746.9px;top:825.9px;font-size:31.6px;line-height:40px;letter-spacing:-0.80px;color:#1a1a1a;">Balance</div>
<div class="t" style="left:1979.4px;top:825.9px;font-size:31.6px;line-height:40px;letter-spacing:0.11px;color:#1a1a1a;">% of Budget Bal.</div>
<div class="t" style="left:2238.5px;top:825.9px;font-size:31.6px;line-height:40px;letter-spacing:-0.06px;color:#1a1a1a;">Budget Balance</div>
<div class="r" style="left:353.3px;top:827.2px;width:36.6px;height:36.4px;background:#fff;border:1.5px solid #a6a6a6;border-radius:4px;"></div>
<svg class="r" style="left:362.9px;top:839.8px" width="17.1" height="11.5" viewBox="0 0 17.1 11.5"><path d="M3 3 L8.5 8.5 L14.1 3" fill="none" stroke="#6b6b6b" stroke-width="1.6" stroke-linecap="round" stroke-linejoin="round"/></svg>
<div class="r" style="left:754.0px;top:827.2px;width:36.6px;height:36.4px;background:#fff;border:1.5px solid #a6a6a6;border-radius:4px;"></div>
<svg class="r" style="left:763.6px;top:839.8px" width="17.1" height="11.5" viewBox="0 0 17.1 11.5"><path d="M3 3 L8.5 8.5 L14.1 3" fill="none" stroke="#6b6b6b" stroke-width="1.6" stroke-linecap="round" stroke-linejoin="round"/></svg>
<div class="r" style="left:1024.0px;top:827.2px;width:36.6px;height:36.4px;background:#fff;border:1.5px solid #a6a6a6;border-radius:4px;"></div>
<svg class="r" style="left:1024.0px;top:827.9px" width="36.3" height="35.3" viewBox="0 0 36.3 35.3"><path d="M7 21.5 L10.5 25.5 L16 19.5" fill="none" stroke="#3a8a4d" stroke-width="1.4"/><path d="M18 8.5 H32 V11.5 L27.8 14.5 V24 H22.2 V14.5 L18 11.5Z" fill="none" stroke="#3a8a4d" stroke-width="1.4" stroke-linejoin="round"/></svg>
<div class="r" style="left:0;top:411px;width:3681px;height:1625.0px;overflow:hidden">
<div class="r" style="left:172px;top:504.0px;width:2306px;height:2px;background:#d5d5de"></div>
<div class="t" style="left:179.1px;top:464.0px;font-size:31.6px;line-height:40px;color:#000;">10000</div>
<div class="t" style="left:399.0px;top:464.0px;font-size:31.6px;line-height:40px;transform:scaleX(0.9134);transform-origin:0 0;color:#000;">BALANCE SHEET</div>
<div class="t" style="left:799.8px;top:464.0px;font-size:31.6px;line-height:40px;letter-spacing:0.50px;color:#000;">Heading</div>
<div class="t" style="left:1229.9px;top:464.0px;font-size:31.6px;line-height:40px;letter-spacing:-0.86px;color:#000;">0.00</div>
<div class="t" style="left:1464.2px;top:464.0px;font-size:31.6px;line-height:40px;letter-spacing:-1.05px;color:#000;">0.00%</div>
<div class="t" style="left:1675.9px;top:464.0px;font-size:31.6px;line-height:40px;letter-spacing:-0.86px;color:#000;">0.00</div>
<div class="t" style="left:1907.4px;top:464.0px;font-size:31.6px;line-height:40px;letter-spacing:-0.86px;color:#000;">0.00</div>
<div class="t" style="left:2139.0px;top:464.0px;font-size:31.6px;line-height:40px;letter-spacing:-1.02px;color:#000;">0.00%</div>
<div class="t" style="left:2411.4px;top:464.0px;font-size:31.6px;line-height:40px;letter-spacing:-0.86px;color:#000;">0.00</div>
<div class="r" style="left:172px;top:553.0px;width:2306px;height:2px;background:#d5d5de"></div>
<div class="t" style="left:179.1px;top:513.5px;font-size:31.6px;line-height:40px;color:#000;">10001</div>
<div class="t" style="left:399.0px;top:513.5px;font-size:31.6px;line-height:40px;transform:scaleX(0.8501);transform-origin:0 0;color:#000;">ASSETS</div>
<div class="t" style="left:799.8px;top:513.5px;font-size:31.6px;line-height:40px;letter-spacing:0.49px;color:#000;">Begin-Total</div>
<div class="t" style="left:1229.9px;top:513.5px;font-size:31.6px;line-height:40px;letter-spacing:-0.86px;color:#000;">0.00</div>
<div class="t" style="left:1464.2px;top:513.5px;font-size:31.6px;line-height:40px;letter-spacing:-1.05px;color:#000;">0.00%</div>
<div class="t" style="left:1675.9px;top:513.5px;font-size:31.6px;line-height:40px;letter-spacing:-0.86px;color:#000;">0.00</div>
<div class="t" style="left:1907.4px;top:513.5px;font-size:31.6px;line-height:40px;letter-spacing:-0.86px;color:#000;">0.00</div>
<div class="t" style="left:2139.0px;top:513.5px;font-size:31.6px;line-height:40px;letter-spacing:-1.02px;color:#000;">0.00%</div>
<div class="t" style="left:2411.4px;top:513.5px;font-size:31.6px;line-height:40px;letter-spacing:-0.86px;color:#000;">0.00</div>
<div class="r" style="left:172px;top:603.0px;width:2306px;height:2px;background:#d5d5de"></div>
<div class="t" style="left:179.1px;top:563.0px;font-size:31.6px;line-height:40px;color:#000;">10100</div>
<div class="t" style="left:416.6px;top:563.0px;font-size:31.6px;line-height:40px;letter-spacing:0.45px;color:#000;">Checking account</div>
<div class="t" style="left:799.8px;top:563.0px;font-size:31.6px;line-height:40px;letter-spacing:0.02px;color:#000;">Posting</div>
<div class="t" style="left:1134.5px;top:563.0px;font-size:31.6px;line-height:40px;letter-spacing:-0.43px;color:#000;">181,842.72</div>
<div class="t" style="left:1464.2px;top:563.0px;font-size:31.6px;line-height:40px;letter-spacing:-1.05px;color:#000;">0.00%</div>
<div class="t" style="left:1675.9px;top:563.0px;font-size:31.6px;line-height:40px;letter-spacing:-0.86px;color:#000;">0.00</div>
<div class="t" style="left:1812.0px;top:563.0px;font-size:31.6px;line-height:40px;letter-spacing:-0.43px;color:#000;">181,842.72</div>
<div class="t" style="left:2139.0px;top:563.0px;font-size:31.6px;line-height:40px;letter-spacing:-1.02px;color:#000;">0.00%</div>
<div class="t" style="left:2411.4px;top:563.0px;font-size:31.6px;line-height:40px;letter-spacing:-0.86px;color:#000;">0.00</div>
<div class="r" style="left:172px;top:653.0px;width:2306px;height:2px;background:#d5d5de"></div>
<div class="t" style="left:179.1px;top:612.5px;font-size:31.6px;line-height:40px;color:#000;">10200</div>
<div class="t" style="left:416.6px;top:612.5px;font-size:31.6px;line-height:40px;letter-spacing:0.30px;color:#000;">Saving account</div>
<div class="t" style="left:799.8px;top:612.5px;font-size:31.6px;line-height:40px;letter-spacing:0.02px;color:#000;">Posting</div>
<div class="t" style="left:1229.9px;top:612.5px;font-size:31.6px;line-height:40px;letter-spacing:-0.86px;color:#000;">0.00</div>
<div class="t" style="left:1464.2px;top:612.5px;font-size:31.6px;line-height:40px;letter-spacing:-1.05px;color:#000;">0.00%</div>
<div class="t" style="left:1675.9px;top:612.5px;font-size:31.6px;line-height:40px;letter-spacing:-0.86px;color:#000;">0.00</div>
<div class="t" style="left:1907.4px;top:612.5px;font-size:31.6px;line-height:40px;letter-spacing:-0.86px;color:#000;">0.00</div>
<div class="t" style="left:2139.0px;top:612.5px;font-size:31.6px;line-height:40px;letter-spacing:-1.02px;color:#000;">0.00%</div>
<div class="t" style="left:2411.4px;top:612.5px;font-size:31.6px;line-height:40px;letter-spacing:-0.86px;color:#000;">0.00</div>
<div class="r" style="left:172px;top:702.0px;width:2306px;height:2px;background:#d5d5de"></div>
<div class="t" style="left:179.1px;top:662.0px;font-size:31.6px;line-height:40px;color:#000;">10300</div>
<div class="t" style="left:416.6px;top:662.0px;font-size:31.6px;line-height:40px;letter-spacing:-0.51px;color:#000;">Petty Cash</div>
<div class="t" style="left:799.8px;top:662.0px;font-size:31.6px;line-height:40px;letter-spacing:0.02px;color:#000;">Posting</div>
<div class="t" style="left:1110.8px;top:662.0px;font-size:31.6px;line-height:40px;letter-spacing:-0.59px;color:#000;">1,224,787.68</div>
<div class="t" style="left:1464.2px;top:662.0px;font-size:31.6px;line-height:40px;letter-spacing:-1.05px;color:#000;">0.00%</div>
<div class="t" style="left:1675.9px;top:662.0px;font-size:31.6px;line-height:40px;letter-spacing:-0.86px;color:#000;">0.00</div>
<div class="t" style="left:1788.3px;top:662.0px;font-size:31.6px;line-height:40px;letter-spacing:-0.59px;color:#000;">1,224,787.68</div>
<div class="t" style="left:2139.0px;top:662.0px;font-size:31.6px;line-height:40px;letter-spacing:-1.02px;color:#000;">0.00%</div>
<div class="t" style="left:2411.4px;top:662.0px;font-size:31.6px;line-height:40px;letter-spacing:-0.86px;color:#000;">0.00</div>
<div class="r" style="left:172px;top:751.0px;width:2306px;height:2px;background:#d5d5de"></div>
<div class="t" style="left:179.1px;top:711.5px;font-size:31.6px;line-height:40px;color:#000;">10400</div>
<div class="t" style="left:416.6px;top:711.5px;font-size:31.6px;line-height:40px;color:#000;">Accounts Receivable</div>
<div class="t" style="left:799.8px;top:711.5px;font-size:31.6px;line-height:40px;letter-spacing:0.02px;color:#000;">Posting</div>
<div class="t" style="left:1134.5px;top:711.5px;font-size:31.6px;line-height:40px;letter-spacing:-0.43px;color:#000;">990,372.32</div>
<div class="t" style="left:1464.2px;top:711.5px;font-size:31.6px;line-height:40px;letter-spacing:-1.05px;color:#000;">0.00%</div>
<div class="t" style="left:1675.9px;top:711.5px;font-size:31.6px;line-height:40px;letter-spacing:-0.86px;color:#000;">0.00</div>
<div class="t" style="left:1812.0px;top:711.5px;font-size:31.6px;line-height:40px;letter-spacing:-0.43px;color:#000;">990,372.32</div>
<div class="t" style="left:2139.0px;top:711.5px;font-size:31.6px;line-height:40px;letter-spacing:-1.02px;color:#000;">0.00%</div>
<div class="t" style="left:2411.4px;top:711.5px;font-size:31.6px;line-height:40px;letter-spacing:-0.86px;color:#000;">0.00</div>
<div class="r" style="left:172px;top:801.0px;width:2306px;height:2px;background:#d5d5de"></div>
<div class="t" style="left:179.1px;top:761.0px;font-size:31.6px;line-height:40px;color:#000;">10500</div>
<div class="t" style="left:416.6px;top:761.0px;font-size:31.6px;line-height:40px;letter-spacing:0.05px;color:#000;">Prepaid Rent</div>
<div class="t" style="left:799.8px;top:761.0px;font-size:31.6px;line-height:40px;letter-spacing:0.02px;color:#000;">Posting</div>
<div class="t" style="left:1229.9px;top:761.0px;font-size:31.6px;line-height:40px;letter-spacing:-0.86px;color:#000;">0.00</div>
<div class="t" style="left:1464.2px;top:761.0px;font-size:31.6px;line-height:40px;letter-spacing:-1.05px;color:#000;">0.00%</div>
<div class="t" style="left:1675.9px;top:761.0px;font-size:31.6px;line-height:40px;letter-spacing:-0.86px;color:#000;">0.00</div>
<div class="t" style="left:1907.4px;top:761.0px;font-size:31.6px;line-height:40px;letter-spacing:-0.86px;color:#000;">0.00</div>
<div class="t" style="left:2139.0px;top:761.0px;font-size:31.6px;line-height:40px;letter-spacing:-1.02px;color:#000;">0.00%</div>
<div class="t" style="left:2411.4px;top:761.0px;font-size:31.6px;line-height:40px;letter-spacing:-0.86px;color:#000;">0.00</div>
<div class="r" style="left:172px;top:851.0px;width:2306px;height:2px;background:#d5d5de"></div>
<div class="t" style="left:179.1px;top:810.5px;font-size:31.6px;line-height:40px;color:#000;">10600</div>
<div class="t" style="left:416.6px;top:810.5px;font-size:31.6px;line-height:40px;letter-spacing:0.13px;color:#000;">Prepaid Insurance</div>
<div class="t" style="left:799.8px;top:810.5px;font-size:31.6px;line-height:40px;letter-spacing:0.02px;color:#000;">Posting</div>
<div class="t" style="left:1229.9px;top:810.5px;font-size:31.6px;line-height:40px;letter-spacing:-0.86px;color:#000;">0.00</div>
<div class="t" style="left:1464.2px;top:810.5px;font-size:31.6px;line-height:40px;letter-spacing:-1.05px;color:#000;">0.00%</div>
<div class="t" style="left:1675.9px;top:810.5px;font-size:31.6px;line-height:40px;letter-spacing:-0.86px;color:#000;">0.00</div>
<div class="t" style="left:1907.4px;top:810.5px;font-size:31.6px;line-height:40px;letter-spacing:-0.86px;color:#000;">0.00</div>
<div class="t" style="left:2139.0px;top:810.5px;font-size:31.6px;line-height:40px;letter-spacing:-1.02px;color:#000;">0.00%</div>
<div class="t" style="left:2411.4px;top:810.5px;font-size:31.6px;line-height:40px;letter-spacing:-0.86px;color:#000;">0.00</div>
<div class="r" style="left:172px;top:900.0px;width:2306px;height:2px;background:#d5d5de"></div>
<div class="t" style="left:179.1px;top:860.0px;font-size:31.6px;line-height:40px;color:#000;">10700</div>
<div class="t" style="left:416.6px;top:860.0px;font-size:31.6px;line-height:40px;letter-spacing:0.88px;color:#000;">Inventory</div>
<div class="t" style="left:799.8px;top:860.0px;font-size:31.6px;line-height:40px;letter-spacing:0.02px;color:#000;">Posting</div>
<div class="t" style="left:1134.5px;top:860.0px;font-size:31.6px;line-height:40px;letter-spacing:-0.43px;color:#000;">727,120.32</div>
<div class="t" style="left:1464.2px;top:860.0px;font-size:31.6px;line-height:40px;letter-spacing:-1.05px;color:#000;">0.00%</div>
<div class="t" style="left:1675.9px;top:860.0px;font-size:31.6px;line-height:40px;letter-spacing:-0.86px;color:#000;">0.00</div>
<div class="t" style="left:1812.0px;top:860.0px;font-size:31.6px;line-height:40px;letter-spacing:-0.43px;color:#000;">727,120.32</div>
<div class="t" style="left:2139.0px;top:860.0px;font-size:31.6px;line-height:40px;letter-spacing:-1.02px;color:#000;">0.00%</div>
<div class="t" style="left:2411.4px;top:860.0px;font-size:31.6px;line-height:40px;letter-spacing:-0.86px;color:#000;">0.00</div>
<div class="r" style="left:172px;top:949.0px;width:2306px;height:2px;background:#d5d5de"></div>
<div class="t" style="left:179.1px;top:909.5px;font-size:31.6px;line-height:40px;color:#000;">10750</div>
<div class="t" style="left:416.6px;top:909.5px;font-size:31.6px;line-height:40px;letter-spacing:0.32px;color:#000;width:376.0px;overflow:hidden;">WIP Account, Finished goods</div>
<div class="t" style="left:799.8px;top:909.5px;font-size:31.6px;line-height:40px;letter-spacing:0.02px;color:#000;">Posting</div>
<div class="t" style="left:1229.9px;top:909.5px;font-size:31.6px;line-height:40px;letter-spacing:-0.86px;color:#000;">0.00</div>
<div class="t" style="left:1464.2px;top:909.5px;font-size:31.6px;line-height:40px;letter-spacing:-1.05px;color:#000;">0.00%</div>
<div class="t" style="left:1675.9px;top:909.5px;font-size:31.6px;line-height:40px;letter-spacing:-0.86px;color:#000;">0.00</div>
<div class="t" style="left:1907.4px;top:909.5px;font-size:31.6px;line-height:40px;letter-spacing:-0.86px;color:#000;">0.00</div>
<div class="t" style="left:2139.0px;top:909.5px;font-size:31.6px;line-height:40px;letter-spacing:-1.02px;color:#000;">0.00%</div>
<div class="t" style="left:2411.4px;top:909.5px;font-size:31.6px;line-height:40px;letter-spacing:-0.86px;color:#000;">0.00</div>
<div class="r" style="left:172px;top:999.0px;width:2306px;height:2px;background:#d5d5de"></div>
<div class="t" style="left:179.1px;top:959.0px;font-size:31.6px;line-height:40px;color:#000;">10800</div>
<div class="t" style="left:416.6px;top:959.0px;font-size:31.6px;line-height:40px;letter-spacing:0.68px;color:#000;">Equipment</div>
<div class="t" style="left:799.8px;top:959.0px;font-size:31.6px;line-height:40px;letter-spacing:0.02px;color:#000;">Posting</div>
<div class="t" style="left:1110.8px;top:959.0px;font-size:31.6px;line-height:40px;letter-spacing:-0.59px;color:#000;">1,859,200.00</div>
<div class="t" style="left:1464.2px;top:959.0px;font-size:31.6px;line-height:40px;letter-spacing:-1.05px;color:#000;">0.00%</div>
<div class="t" style="left:1675.9px;top:959.0px;font-size:31.6px;line-height:40px;letter-spacing:-0.86px;color:#000;">0.00</div>
<div class="t" style="left:1788.3px;top:959.0px;font-size:31.6px;line-height:40px;letter-spacing:-0.59px;color:#000;">1,859,200.00</div>
<div class="t" style="left:2139.0px;top:959.0px;font-size:31.6px;line-height:40px;letter-spacing:-1.02px;color:#000;">0.00%</div>
<div class="t" style="left:2411.4px;top:959.0px;font-size:31.6px;line-height:40px;letter-spacing:-0.86px;color:#000;">0.00</div>
<div class="r" style="left:172px;top:1049.0px;width:2306px;height:2px;background:#d5d5de"></div>
<div class="t" style="left:179.1px;top:1008.5px;font-size:31.6px;line-height:40px;color:#000;">10900</div>
<div class="t" style="left:416.6px;top:1008.5px;font-size:31.6px;line-height:40px;letter-spacing:0.56px;color:#000;width:376.0px;overflow:hidden;">Accumulated Depreciation</div>
<div class="t" style="left:799.8px;top:1008.5px;font-size:31.6px;line-height:40px;letter-spacing:0.02px;color:#000;">Posting</div>
<div class="t" style="left:1229.9px;top:1008.5px;font-size:31.6px;line-height:40px;letter-spacing:-0.86px;color:#000;">0.00</div>
<div class="t" style="left:1464.2px;top:1008.5px;font-size:31.6px;line-height:40px;letter-spacing:-1.05px;color:#000;">0.00%</div>
<div class="t" style="left:1675.9px;top:1008.5px;font-size:31.6px;line-height:40px;letter-spacing:-0.86px;color:#000;">0.00</div>
<div class="t" style="left:1907.4px;top:1008.5px;font-size:31.6px;line-height:40px;letter-spacing:-0.86px;color:#000;">0.00</div>
<div class="t" style="left:2139.0px;top:1008.5px;font-size:31.6px;line-height:40px;letter-spacing:-1.02px;color:#000;">0.00%</div>
<div class="t" style="left:2411.4px;top:1008.5px;font-size:31.6px;line-height:40px;letter-spacing:-0.86px;color:#000;">0.00</div>
<div class="r" style="left:172px;top:1098.0px;width:2306px;height:2px;background:#d5d5de"></div>
<div class="t" style="left:179.1px;top:1058.0px;font-size:31.6px;line-height:40px;color:#000;">10910</div>
<div class="t" style="left:416.6px;top:1058.0px;font-size:31.6px;line-height:40px;letter-spacing:-0.62px;color:#000;">WIP Job Sales</div>
<div class="t" style="left:799.8px;top:1058.0px;font-size:31.6px;line-height:40px;letter-spacing:0.02px;color:#000;">Posting</div>
<div class="t" style="left:1229.9px;top:1058.0px;font-size:31.6px;line-height:40px;letter-spacing:-0.86px;color:#000;">0.00</div>
<div class="t" style="left:1464.2px;top:1058.0px;font-size:31.6px;line-height:40px;letter-spacing:-1.05px;color:#000;">0.00%</div>
<div class="t" style="left:1675.9px;top:1058.0px;font-size:31.6px;line-height:40px;letter-spacing:-0.86px;color:#000;">0.00</div>
<div class="t" style="left:1907.4px;top:1058.0px;font-size:31.6px;line-height:40px;letter-spacing:-0.86px;color:#000;">0.00</div>
<div class="t" style="left:2139.0px;top:1058.0px;font-size:31.6px;line-height:40px;letter-spacing:-1.02px;color:#000;">0.00%</div>
<div class="t" style="left:2411.4px;top:1058.0px;font-size:31.6px;line-height:40px;letter-spacing:-0.86px;color:#000;">0.00</div>
<div class="r" style="left:172px;top:1147.0px;width:2306px;height:2px;background:#d5d5de"></div>
<div class="t" style="left:179.1px;top:1107.5px;font-size:31.6px;line-height:40px;color:#000;">10920</div>
<div class="t" style="left:416.6px;top:1107.5px;font-size:31.6px;line-height:40px;letter-spacing:-0.07px;color:#000;">Invoiced Job Sales</div>
<div class="t" style="left:799.8px;top:1107.5px;font-size:31.6px;line-height:40px;letter-spacing:0.02px;color:#000;">Posting</div>
<div class="t" style="left:1229.9px;top:1107.5px;font-size:31.6px;line-height:40px;letter-spacing:-0.86px;color:#000;">0.00</div>
<div class="t" style="left:1464.2px;top:1107.5px;font-size:31.6px;line-height:40px;letter-spacing:-1.05px;color:#000;">0.00%</div>
<div class="t" style="left:1675.9px;top:1107.5px;font-size:31.6px;line-height:40px;letter-spacing:-0.86px;color:#000;">0.00</div>
<div class="t" style="left:1907.4px;top:1107.5px;font-size:31.6px;line-height:40px;letter-spacing:-0.86px;color:#000;">0.00</div>
<div class="t" style="left:2139.0px;top:1107.5px;font-size:31.6px;line-height:40px;letter-spacing:-1.02px;color:#000;">0.00%</div>
<div class="t" style="left:2411.4px;top:1107.5px;font-size:31.6px;line-height:40px;letter-spacing:-0.86px;color:#000;">0.00</div>
<div class="r" style="left:172px;top:1197.0px;width:2306px;height:2px;background:#d5d5de"></div>
<div class="t" style="left:179.1px;top:1157.0px;font-size:31.6px;line-height:40px;color:#000;">10940</div>
<div class="t" style="left:416.6px;top:1157.0px;font-size:31.6px;line-height:40px;letter-spacing:-0.01px;color:#000;">Accrued Job Costs</div>
<div class="t" style="left:799.8px;top:1157.0px;font-size:31.6px;line-height:40px;letter-spacing:0.02px;color:#000;">Posting</div>
<div class="t" style="left:1229.9px;top:1157.0px;font-size:31.6px;line-height:40px;letter-spacing:-0.86px;color:#000;">0.00</div>
<div class="t" style="left:1464.2px;top:1157.0px;font-size:31.6px;line-height:40px;letter-spacing:-1.05px;color:#000;">0.00%</div>
<div class="t" style="left:1675.9px;top:1157.0px;font-size:31.6px;line-height:40px;letter-spacing:-0.86px;color:#000;">0.00</div>
<div class="t" style="left:1907.4px;top:1157.0px;font-size:31.6px;line-height:40px;letter-spacing:-0.86px;color:#000;">0.00</div>
<div class="t" style="left:2139.0px;top:1157.0px;font-size:31.6px;line-height:40px;letter-spacing:-1.02px;color:#000;">0.00%</div>
<div class="t" style="left:2411.4px;top:1157.0px;font-size:31.6px;line-height:40px;letter-spacing:-0.86px;color:#000;">0.00</div>
<div class="r" style="left:172px;top:1247.0px;width:2306px;height:2px;background:#d5d5de"></div>
<div class="t" style="left:179.1px;top:1206.5px;font-size:31.6px;line-height:40px;color:#000;">10950</div>
<div class="t" style="left:416.6px;top:1206.5px;font-size:31.6px;line-height:40px;letter-spacing:-0.37px;color:#000;">WIP Job Costs</div>
<div class="t" style="left:799.8px;top:1206.5px;font-size:31.6px;line-height:40px;letter-spacing:0.02px;color:#000;">Posting</div>
<div class="t" style="left:1229.9px;top:1206.5px;font-size:31.6px;line-height:40px;letter-spacing:-0.86px;color:#000;">0.00</div>
<div class="t" style="left:1464.2px;top:1206.5px;font-size:31.6px;line-height:40px;letter-spacing:-1.05px;color:#000;">0.00%</div>
<div class="t" style="left:1675.9px;top:1206.5px;font-size:31.6px;line-height:40px;letter-spacing:-0.86px;color:#000;">0.00</div>
<div class="t" style="left:1907.4px;top:1206.5px;font-size:31.6px;line-height:40px;letter-spacing:-0.86px;color:#000;">0.00</div>
<div class="t" style="left:2139.0px;top:1206.5px;font-size:31.6px;line-height:40px;letter-spacing:-1.02px;color:#000;">0.00%</div>
<div class="t" style="left:2411.4px;top:1206.5px;font-size:31.6px;line-height:40px;letter-spacing:-0.86px;color:#000;">0.00</div>
<div class="r" style="left:172px;top:1296.0px;width:2306px;height:2px;background:#d5d5de"></div>
<div class="t" style="left:179.1px;top:1256.0px;font-size:31.6px;line-height:40px;color:#000;">10990</div>
<div class="t" style="left:399.0px;top:1256.0px;font-size:31.6px;line-height:40px;transform:scaleX(0.8977);transform-origin:0 0;color:#000;">TOTAL ASSETS</div>
<div class="t" style="left:799.8px;top:1256.0px;font-size:31.6px;line-height:40px;letter-spacing:0.24px;color:#000;">End-Total</div>
<div class="t" style="left:1107.8px;top:1256.0px;font-size:31.6px;line-height:40px;letter-spacing:-0.32px;color:#000;">4,983,323.04</div>
<div class="t" style="left:1464.2px;top:1256.0px;font-size:31.6px;line-height:40px;letter-spacing:-1.05px;color:#000;">0.00%</div>
<div class="t" style="left:1675.9px;top:1256.0px;font-size:31.6px;line-height:40px;letter-spacing:-0.86px;color:#000;">0.00</div>
<div class="t" style="left:1785.3px;top:1256.0px;font-size:31.6px;line-height:40px;letter-spacing:-0.32px;color:#000;">4,983,323.04</div>
<div class="t" style="left:2139.0px;top:1256.0px;font-size:31.6px;line-height:40px;letter-spacing:-1.02px;color:#000;">0.00%</div>
<div class="t" style="left:2411.4px;top:1256.0px;font-size:31.6px;line-height:40px;letter-spacing:-0.86px;color:#000;">0.00</div>
<div class="r" style="left:172px;top:1345.0px;width:2306px;height:2px;background:#d5d5de"></div>
<div class="t" style="left:179.1px;top:1305.5px;font-size:31.6px;line-height:40px;color:#000;">14110</div>
<div class="t" style="left:399.0px;top:1305.5px;font-size:31.6px;line-height:40px;letter-spacing:0.04px;color:#000;">Raw Materials</div>
<div class="t" style="left:799.8px;top:1305.5px;font-size:31.6px;line-height:40px;letter-spacing:0.02px;color:#000;">Posting</div>
<div class="t" style="left:1229.9px;top:1305.5px;font-size:31.6px;line-height:40px;letter-spacing:-0.86px;color:#000;">0.00</div>
<div class="t" style="left:1464.2px;top:1305.5px;font-size:31.6px;line-height:40px;letter-spacing:-1.05px;color:#000;">0.00%</div>
<div class="t" style="left:1675.9px;top:1305.5px;font-size:31.6px;line-height:40px;letter-spacing:-0.86px;color:#000;">0.00</div>
<div class="t" style="left:1907.4px;top:1305.5px;font-size:31.6px;line-height:40px;letter-spacing:-0.86px;color:#000;">0.00</div>
<div class="t" style="left:2139.0px;top:1305.5px;font-size:31.6px;line-height:40px;letter-spacing:-1.02px;color:#000;">0.00%</div>
<div class="t" style="left:2411.4px;top:1305.5px;font-size:31.6px;line-height:40px;letter-spacing:-0.86px;color:#000;">0.00</div>
<div class="r" style="left:172px;top:1395.0px;width:2306px;height:2px;background:#d5d5de"></div>
<div class="t" style="left:179.1px;top:1355.0px;font-size:31.6px;line-height:40px;color:#000;">14140</div>
<div class="t" style="left:399.0px;top:1355.0px;font-size:31.6px;line-height:40px;letter-spacing:0.36px;color:#000;">Direct Cost Applied, Retail</div>
<div class="t" style="left:799.8px;top:1355.0px;font-size:31.6px;line-height:40px;letter-spacing:0.02px;color:#000;">Posting</div>
<div class="t" style="left:1229.9px;top:1355.0px;font-size:31.6px;line-height:40px;letter-spacing:-0.86px;color:#000;">0.00</div>
<div class="t" style="left:1464.2px;top:1355.0px;font-size:31.6px;line-height:40px;letter-spacing:-1.05px;color:#000;">0.00%</div>
<div class="t" style="left:1675.9px;top:1355.0px;font-size:31.6px;line-height:40px;letter-spacing:-0.86px;color:#000;">0.00</div>
<div class="t" style="left:1907.4px;top:1355.0px;font-size:31.6px;line-height:40px;letter-spacing:-0.86px;color:#000;">0.00</div>
<div class="t" style="left:2139.0px;top:1355.0px;font-size:31.6px;line-height:40px;letter-spacing:-1.02px;color:#000;">0.00%</div>
<div class="t" style="left:2411.4px;top:1355.0px;font-size:31.6px;line-height:40px;letter-spacing:-0.86px;color:#000;">0.00</div>
<div class="r" style="left:172px;top:1445.0px;width:2306px;height:2px;background:#d5d5de"></div>
<div class="t" style="left:179.1px;top:1404.5px;font-size:31.6px;line-height:40px;color:#000;">15110</div>
<div class="t" style="left:399.0px;top:1404.5px;font-size:31.6px;line-height:40px;letter-spacing:0.36px;color:#000;">Customers Domestic</div>
<div class="t" style="left:799.8px;top:1404.5px;font-size:31.6px;line-height:40px;letter-spacing:0.02px;color:#000;">Posting</div>
<div class="t" style="left:1229.9px;top:1404.5px;font-size:31.6px;line-height:40px;letter-spacing:-0.86px;color:#000;">0.00</div>
<div class="t" style="left:1464.2px;top:1404.5px;font-size:31.6px;line-height:40px;letter-spacing:-1.05px;color:#000;">0.00%</div>
<div class="t" style="left:1675.9px;top:1404.5px;font-size:31.6px;line-height:40px;letter-spacing:-0.86px;color:#000;">0.00</div>
<div class="t" style="left:1907.4px;top:1404.5px;font-size:31.6px;line-height:40px;letter-spacing:-0.86px;color:#000;">0.00</div>
<div class="t" style="left:2139.0px;top:1404.5px;font-size:31.6px;line-height:40px;letter-spacing:-1.02px;color:#000;">0.00%</div>
<div class="t" style="left:2411.4px;top:1404.5px;font-size:31.6px;line-height:40px;letter-spacing:-0.86px;color:#000;">0.00</div>
<div class="r" style="left:172px;top:1494.0px;width:2306px;height:2px;background:#d5d5de"></div>
<div class="t" style="left:179.1px;top:1454.0px;font-size:31.6px;line-height:40px;color:#000;">20001</div>
<div class="t" style="left:399.0px;top:1454.0px;font-size:31.6px;line-height:40px;transform:scaleX(0.9001);transform-origin:0 0;color:#000;">LIABILITIES</div>
<div class="t" style="left:799.8px;top:1454.0px;font-size:31.6px;line-height:40px;letter-spacing:0.49px;color:#000;">Begin-Total</div>
<div class="t" style="left:1229.9px;top:1454.0px;font-size:31.6px;line-height:40px;letter-spacing:-0.86px;color:#000;">0.00</div>
<div class="t" style="left:1464.2px;top:1454.0px;font-size:31.6px;line-height:40px;letter-spacing:-1.05px;color:#000;">0.00%</div>
<div class="t" style="left:1675.9px;top:1454.0px;font-size:31.6px;line-height:40px;letter-spacing:-0.86px;color:#000;">0.00</div>
<div class="t" style="left:1907.4px;top:1454.0px;font-size:31.6px;line-height:40px;letter-spacing:-0.86px;color:#000;">0.00</div>
<div class="t" style="left:2139.0px;top:1454.0px;font-size:31.6px;line-height:40px;letter-spacing:-1.02px;color:#000;">0.00%</div>
<div class="t" style="left:2411.4px;top:1454.0px;font-size:31.6px;line-height:40px;letter-spacing:-0.86px;color:#000;">0.00</div>
<div class="r" style="left:172px;top:1543.0px;width:2306px;height:2px;background:#d5d5de"></div>
<div class="t" style="left:179.1px;top:1503.5px;font-size:31.6px;line-height:40px;color:#000;">20100</div>
<div class="t" style="left:416.6px;top:1503.5px;font-size:31.6px;line-height:40px;letter-spacing:0.02px;color:#000;">Accounts Payable</div>
<div class="t" style="left:799.8px;top:1503.5px;font-size:31.6px;line-height:40px;letter-spacing:0.02px;color:#000;">Posting</div>
<div class="t" style="left:1121.8px;top:1503.5px;font-size:31.6px;line-height:40px;letter-spacing:-0.17px;color:#000;">-990,777.76</div>
<div class="t" style="left:1464.2px;top:1503.5px;font-size:31.6px;line-height:40px;letter-spacing:-1.05px;color:#000;">0.00%</div>
<div class="t" style="left:1675.9px;top:1503.5px;font-size:31.6px;line-height:40px;letter-spacing:-0.86px;color:#000;">0.00</div>
<div class="t" style="left:1799.3px;top:1503.5px;font-size:31.6px;line-height:40px;letter-spacing:-0.17px;color:#000;">-990,777.76</div>
<div class="t" style="left:2139.0px;top:1503.5px;font-size:31.6px;line-height:40px;letter-spacing:-1.02px;color:#000;">0.00%</div>
<div class="t" style="left:2411.4px;top:1503.5px;font-size:31.6px;line-height:40px;letter-spacing:-0.86px;color:#000;">0.00</div>
<div class="r" style="left:172px;top:1593.0px;width:2306px;height:2px;background:#d5d5de"></div>
<div class="t" style="left:179.1px;top:1553.0px;font-size:31.6px;line-height:40px;color:#000;">20200</div>
<div class="t" style="left:416.6px;top:1553.0px;font-size:31.6px;line-height:40px;letter-spacing:-0.02px;color:#000;">Purchase Discounts</div>
<div class="t" style="left:799.8px;top:1553.0px;font-size:31.6px;line-height:40px;letter-spacing:0.02px;color:#000;">Posting</div>
<div class="t" style="left:1229.9px;top:1553.0px;font-size:31.6px;line-height:40px;letter-spacing:-0.86px;color:#000;">0.00</div>
<div class="t" style="left:1464.2px;top:1553.0px;font-size:31.6px;line-height:40px;letter-spacing:-1.05px;color:#000;">0.00%</div>
<div class="t" style="left:1675.9px;top:1553.0px;font-size:31.6px;line-height:40px;letter-spacing:-0.86px;color:#000;">0.00</div>
<div class="t" style="left:1907.4px;top:1553.0px;font-size:31.6px;line-height:40px;letter-spacing:-0.86px;color:#000;">0.00</div>
<div class="t" style="left:2139.0px;top:1553.0px;font-size:31.6px;line-height:40px;letter-spacing:-1.02px;color:#000;">0.00%</div>
<div class="t" style="left:2411.4px;top:1553.0px;font-size:31.6px;line-height:40px;letter-spacing:-0.86px;color:#000;">0.00</div>
<div class="r" style="left:172px;top:1643.0px;width:2306px;height:2px;background:#d5d5de"></div>
<div class="t" style="left:179.1px;top:1602.5px;font-size:31.6px;line-height:40px;color:#000;">20300</div>
<div class="t" style="left:416.6px;top:1602.5px;font-size:31.6px;line-height:40px;letter-spacing:0.39px;color:#000;width:376.0px;overflow:hidden;">Purchase Returns &amp; Allowances</div>
<div class="t" style="left:799.8px;top:1602.5px;font-size:31.6px;line-height:40px;letter-spacing:0.02px;color:#000;">Posting</div>
<div class="t" style="left:1229.9px;top:1602.5px;font-size:31.6px;line-height:40px;letter-spacing:-0.86px;color:#000;">0.00</div>
<div class="t" style="left:1464.2px;top:1602.5px;font-size:31.6px;line-height:40px;letter-spacing:-1.05px;color:#000;">0.00%</div>
<div class="t" style="left:1675.9px;top:1602.5px;font-size:31.6px;line-height:40px;letter-spacing:-0.86px;color:#000;">0.00</div>
<div class="t" style="left:1907.4px;top:1602.5px;font-size:31.6px;line-height:40px;letter-spacing:-0.86px;color:#000;">0.00</div>
<div class="t" style="left:2139.0px;top:1602.5px;font-size:31.6px;line-height:40px;letter-spacing:-1.02px;color:#000;">0.00%</div>
<div class="t" style="left:2411.4px;top:1602.5px;font-size:31.6px;line-height:40px;letter-spacing:-0.86px;color:#000;">0.00</div>
</div>
<div class="r" style="left:0;top:411px;width:3681px;height:1625.0px;overflow:hidden">
<div class="r" style="left:2756.2px;top:409.1px;width:431.2px;height:663.4px;background:#fff;border:2px solid #a6a6a6"></div>
<div class="r" style="left:2756.2px;top:478.5px;width:431.2px;height:2px;background:#a6a6a6"></div>
<div class="t" style="left:2779.7px;top:424.9px;font-size:36px;line-height:45px;letter-spacing:0.42px;color:#1a1a1a;-webkit-text-stroke:0.9px #1a1a1a;">Department Code</div>
<svg class="r" style="left:3069.4px;top:425.5px" width="40" height="40" viewBox="0 0 40 40"><g fill="none" stroke="#8a8a8a" stroke-width="2.2"><path d="M14 8 H34 M14 19.5 H34 M14 31 H34"/><path d="M2 6.5 L5.5 10.5 L12 3 M2 18 L5.5 22 L12 14.5 M2 29.5 L5.5 33.5 L12 26"/></g></svg>
<svg class="r" style="left:3127.4px;top:425.5px" width="40" height="40" viewBox="0 0 40 40"><path d="M2 4 H27 L17 14.5 V24 L12 21 V14.5Z" fill="#c9c9c9"/><path d="M14 22 V27 H20" fill="none" stroke="#c9c9c9" stroke-width="2"/><path d="M18 20.5 L33 35 M33 20.5 L18 35" stroke="#f0b8ae" stroke-width="2.2"/></svg>
<div class="r" style="left:2778.3px;top:490.5px;width:387.9px;height:63px;background:#8dd1db;border:2px solid #a6a6a6"></div>
<div class="t" style="left:2793.6px;top:501.0px;font-size:29px;line-height:37px;letter-spacing:1.78px;color:#1a1a1a;-webkit-text-stroke:0.8px #1a1a1a;">ADM</div>
<div class="r" style="left:2778.3px;top:559.0px;width:387.9px;height:63px;background:#8dd1db;border:2px solid #a6a6a6"></div>
<div class="t" style="left:2793.6px;top:569.4px;font-size:29px;line-height:37px;letter-spacing:-0.52px;color:#1a1a1a;-webkit-text-stroke:0.8px #1a1a1a;">BLANK</div>
<div class="r" style="left:2778.3px;top:627.4px;width:387.9px;height:63px;background:#8dd1db;border:2px solid #a6a6a6"></div>
<div class="t" style="left:2793.6px;top:637.9px;font-size:29px;line-height:37px;letter-spacing:-1.93px;color:#1a1a1a;-webkit-text-stroke:0.8px #1a1a1a;">PROD</div>
<div class="r" style="left:2778.3px;top:695.8px;width:387.9px;height:63px;background:#8dd1db;border:2px solid #a6a6a6"></div>
<div class="t" style="left:2793.6px;top:706.3px;font-size:29px;line-height:37px;letter-spacing:-3.12px;color:#1a1a1a;-webkit-text-stroke:0.8px #1a1a1a;">SALES</div>
<div class="r" style="left:2778.3px;top:764.3px;width:387.9px;height:63px;background:#8dd1db;border:2px solid #a6a6a6"></div>
<div class="r" style="left:3195.6px;top:409.1px;width:431.2px;height:663.4px;background:#fff;border:2px solid #a6a6a6"></div>
<div class="r" style="left:3195.6px;top:478.5px;width:431.2px;height:2px;background:#a6a6a6"></div>
<div class="t" style="left:3219.1px;top:424.9px;font-size:36px;line-height:45px;letter-spacing:0.32px;color:#1a1a1a;-webkit-text-stroke:0.9px #1a1a1a;">Customergroup...</div>
<svg class="r" style="left:3508.8px;top:425.5px" width="40" height="40" viewBox="0 0 40 40"><g fill="none" stroke="#8a8a8a" stroke-width="2.2"><path d="M14 8 H34 M14 19.5 H34 M14 31 H34"/><path d="M2 6.5 L5.5 10.5 L12 3 M2 18 L5.5 22 L12 14.5 M2 29.5 L5.5 33.5 L12 26"/></g></svg>
<svg class="r" style="left:3566.8px;top:425.5px" width="40" height="40" viewBox="0 0 40 40"><path d="M2 4 H27 L17 14.5 V24 L12 21 V14.5Z" fill="#c9c9c9"/><path d="M14 22 V27 H20" fill="none" stroke="#c9c9c9" stroke-width="2"/><path d="M18 20.5 L33 35 M33 20.5 L18 35" stroke="#f0b8ae" stroke-width="2.2"/></svg>
<div class="r" style="left:3217.0px;top:490.5px;width:388.0px;height:63px;background:#8dd1db;border:2px solid #a6a6a6"></div>
<div class="t" style="left:3232.3px;top:501.0px;font-size:29px;line-height:37px;letter-spacing:-0.52px;color:#1a1a1a;-webkit-text-stroke:0.8px #1a1a1a;">BLANK</div>
<div class="r" style="left:3217.0px;top:559.0px;width:388.0px;height:63px;background:#8dd1db;border:2px solid #a6a6a6"></div>
<div class="t" style="left:3232.3px;top:569.4px;font-size:29px;line-height:37px;letter-spacing:-2.33px;color:#1a1a1a;-webkit-text-stroke:0.8px #1a1a1a;">LARGE</div>
<div class="r" style="left:3217.0px;top:627.4px;width:388.0px;height:63px;background:#8dd1db;border:2px solid #a6a6a6"></div>
<div class="t" style="left:3232.3px;top:637.9px;font-size:29px;line-height:37px;letter-spacing:0.38px;color:#1a1a1a;-webkit-text-stroke:0.8px #1a1a1a;">MEDIUM</div>
<div class="r" style="left:3217.0px;top:695.8px;width:388.0px;height:63px;background:#8dd1db;border:2px solid #a6a6a6"></div>
<div class="t" style="left:3232.3px;top:706.3px;font-size:29px;line-height:37px;letter-spacing:-0.77px;color:#1a1a1a;-webkit-text-stroke:0.8px #1a1a1a;">SMALL</div>
<div class="r" style="left:3217.0px;top:764.3px;width:388.0px;height:63px;background:#8dd1db;border:2px solid #a6a6a6"></div>
<div class="r" style="left:2759.8px;top:1080.8px;width:430.4px;height:608.7px;background:#fff;border:2px solid #a6a6a6"></div>
<div class="r" style="left:2759.8px;top:1149.4px;width:430.4px;height:2px;background:#a6a6a6"></div>
<div class="t" style="left:2783.3px;top:1096.2px;font-size:36px;line-height:45px;letter-spacing:0.52px;color:#1a1a1a;-webkit-text-stroke:0.9px #1a1a1a;">Account Category</div>
<svg class="r" style="left:3072.2px;top:1096.8px" width="40" height="40" viewBox="0 0 40 40"><g fill="none" stroke="#8a8a8a" stroke-width="2.2"><path d="M14 8 H34 M14 19.5 H34 M14 31 H34"/><path d="M2 6.5 L5.5 10.5 L12 3 M2 18 L5.5 22 L12 14.5 M2 29.5 L5.5 33.5 L12 26"/></g></svg>
<svg class="r" style="left:3130.2px;top:1096.8px" width="40" height="40" viewBox="0 0 40 40"><path d="M2 4 H27 L17 14.5 V24 L12 21 V14.5Z" fill="#c9c9c9"/><path d="M14 22 V27 H20" fill="none" stroke="#c9c9c9" stroke-width="2"/><path d="M18 20.5 L33 35 M33 20.5 L18 35" stroke="#f0b8ae" stroke-width="2.2"/></svg>
<div class="r" style="left:2781.5px;top:1161.4px;width:387.5px;height:63px;background:#8dd1db;border:2px solid #a6a6a6"></div>
<div class="r" style="left:2781.5px;top:1229.9px;width:387.5px;height:63px;background:#8dd1db;border:2px solid #a6a6a6"></div>
<div class="t" style="left:2796.8px;top:1240.3px;font-size:29px;line-height:37px;letter-spacing:-0.61px;color:#1a1a1a;-webkit-text-stroke:0.8px #1a1a1a;">Assets</div>
<div class="r" style="left:2781.5px;top:1298.3px;width:387.5px;height:63px;background:#8dd1db;border:2px solid #a6a6a6"></div>
<div class="t" style="left:2796.8px;top:1308.8px;font-size:29px;line-height:37px;letter-spacing:0.44px;color:#1a1a1a;-webkit-text-stroke:0.8px #1a1a1a;">Cost of Goods Sold</div>
<div class="r" style="left:2781.5px;top:1366.8px;width:387.5px;height:63px;background:#8dd1db;border:2px solid #a6a6a6"></div>
<div class="t" style="left:2796.8px;top:1377.2px;font-size:29px;line-height:37px;letter-spacing:0.68px;color:#1a1a1a;-webkit-text-stroke:0.8px #1a1a1a;">Equity</div>
<div class="r" style="left:2781.5px;top:1435.2px;width:387.5px;height:63px;background:#8dd1db;border:2px solid #a6a6a6"></div>
<div class="t" style="left:2796.8px;top:1445.7px;font-size:29px;line-height:37px;letter-spacing:-0.48px;color:#1a1a1a;-webkit-text-stroke:0.8px #1a1a1a;">Expense</div>
<div class="r" style="left:2781.5px;top:1503.7px;width:387.5px;height:63px;background:#8dd1db;border:2px solid #a6a6a6"></div>
<div class="t" style="left:2796.8px;top:1514.1px;font-size:29px;line-height:37px;letter-spacing:0.98px;color:#1a1a1a;-webkit-text-stroke:0.8px #1a1a1a;">Income</div>
<div class="r" style="left:2781.5px;top:1572.1px;width:387.5px;height:63px;background:#8dd1db;border:2px solid #a6a6a6"></div>
<div class="t" style="left:2796.8px;top:1582.6px;font-size:29px;line-height:37px;letter-spacing:0.67px;color:#1a1a1a;-webkit-text-stroke:0.8px #1a1a1a;">Liabilities</div>
<div class="r" style="left:3195.6px;top:1077.5px;width:431.2px;height:612.0px;background:#fff;border:2px solid #a6a6a6"></div>
<div class="r" style="left:3195.6px;top:1147.0px;width:431.2px;height:2px;background:#a6a6a6"></div>
<div class="t" style="left:3219.1px;top:1093.3px;font-size:36px;line-height:45px;letter-spacing:0.05px;color:#1a1a1a;-webkit-text-stroke:0.9px #1a1a1a;">Account Subcat...</div>
<svg class="r" style="left:3508.8px;top:1094.0px" width="40" height="40" viewBox="0 0 40 40"><g fill="none" stroke="#8a8a8a" stroke-width="2.2"><path d="M14 8 H34 M14 19.5 H34 M14 31 H34"/><path d="M2 6.5 L5.5 10.5 L12 3 M2 18 L5.5 22 L12 14.5 M2 29.5 L5.5 33.5 L12 26"/></g></svg>
<svg class="r" style="left:3566.8px;top:1094.0px" width="40" height="40" viewBox="0 0 40 40"><path d="M2 4 H27 L17 14.5 V24 L12 21 V14.5Z" fill="#c9c9c9"/><path d="M14 22 V27 H20" fill="none" stroke="#c9c9c9" stroke-width="2"/><path d="M18 20.5 L33 35 M33 20.5 L18 35" stroke="#f0b8ae" stroke-width="2.2"/></svg>
<div class="r" style="left:3217.0px;top:1154.6px;width:356.8px;height:63px;background:#8dd1db;border:2px solid #a6a6a6"></div>
<div class="t" style="left:3232.3px;top:1165.1px;font-size:29px;line-height:37px;letter-spacing:0.29px;color:#1a1a1a;-webkit-text-stroke:0.8px #1a1a1a;">Accounts Receivable</div>
<div class="r" style="left:3217.0px;top:1223.0px;width:356.8px;height:63px;background:#8dd1db;border:2px solid #a6a6a6"></div>
<div class="t" style="left:3232.3px;top:1233.5px;font-size:29px;line-height:37px;letter-spacing:0.68px;color:#1a1a1a;-webkit-text-stroke:0.8px #1a1a1a;">Accumulated Depreci...</div>
<div class="r" style="left:3217.0px;top:1291.5px;width:356.8px;height:63px;background:#8dd1db;border:2px solid #a6a6a6"></div>
<div class="t" style="left:3232.3px;top:1302.0px;font-size:29px;line-height:37px;letter-spacing:0.54px;color:#1a1a1a;-webkit-text-stroke:0.8px #1a1a1a;">Advertising Expense</div>
<div class="r" style="left:3217.0px;top:1359.9px;width:356.8px;height:63px;background:#8dd1db;border:2px solid #a6a6a6"></div>
<div class="t" style="left:3232.3px;top:1370.4px;font-size:29px;line-height:37px;letter-spacing:-0.61px;color:#1a1a1a;-webkit-text-stroke:0.8px #1a1a1a;">Assets</div>
<div class="r" style="left:3217.0px;top:1428.4px;width:356.8px;height:63px;background:#8dd1db;border:2px solid #a6a6a6"></div>
<div class="t" style="left:3232.3px;top:1438.9px;font-size:29px;line-height:37px;letter-spacing:0.14px;color:#1a1a1a;-webkit-text-stroke:0.8px #1a1a1a;">Bad Debt Expense</div>
<div class="r" style="left:3217.0px;top:1496.8px;width:356.8px;height:63px;background:#8dd1db;border:2px solid #a6a6a6"></div>
<div class="t" style="left:3232.3px;top:1507.3px;font-size:29px;line-height:37px;letter-spacing:-1.56px;color:#1a1a1a;-webkit-text-stroke:0.8px #1a1a1a;">Cash</div>
<div class="r" style="left:3217.0px;top:1565.3px;width:356.8px;height:63px;background:#8dd1db;border:2px solid #a6a6a6"></div>
<div class="t" style="left:3232.3px;top:1575.8px;font-size:29px;line-height:37px;letter-spacing:0.70px;color:#1a1a1a;-webkit-text-stroke:0.8px #1a1a1a;">Common Stock</div>
<div class="r" style="left:3579.5px;top:1153.6px;width:32.2px;height:600px;background:#e8e8e8"></div>
<div class="r" style="left:3579.5px;top:1153.6px;width:32.2px;height:32.5px;background:#fff;border:1.6px solid #c4c4c4"></div>
<svg class="r" style="left:3579.5px;top:1153.6px" width="32.2" height="32.5"><path d="M8.5 19.5 L16 11.5 L23.5 19.5Z" fill="#6a6a6a"/></svg>
<div class="r" style="left:3579.5px;top:1187.5px;width:32.2px;height:104px;background:#fff;border:1.6px solid #c4c4c4"></div>
</div>
<div class="r" style="left:3681.0px;top:343.3px;width:27.8px;height:1692.8px;background:#e9e9e9;"></div>
<div class="r" style="left:3687.2px;top:383.0px;width:14.6px;height:513.5px;background:#8a8a8a;border-radius:7.3px;"></div>
<svg class="r" style="left:3681.0px;top:348.0px" width="28.0" height="22.0" viewBox="0 0 28.0 22.0"><path d="M6.5 17 L13.6 6.8 L20.7 17Z" fill="#8a8a8a" stroke="#8a8a8a" stroke-width="3.4" stroke-linejoin="round"/></svg>
<svg class="r" style="left:3681.0px;top:2008.0px" width="28.0" height="22.0" viewBox="0 0 28.0 22.0"><path d="M6.5 5.5 L13.6 15.7 L20.7 5.5Z" fill="#8a8a8a" stroke="#8a8a8a" stroke-width="3.4" stroke-linejoin="round"/></svg>
<div class="r" style="left:0.0px;top:2036.0px;width:3709.0px;height:26.8px;background:#e8e8e8;"></div>
<div class="r" style="left:31.0px;top:2042.3px;width:2143.5px;height:14.6px;background:#8a8a8a;border-radius:7.3px;"></div>
<svg class="r" style="left:0.0px;top:2036.0px" width="20.0" height="28.0" viewBox="0 0 20.0 28.0"><path d="M13.5 6.5 L3 13.5 L13.5 20.5Z" fill="#8a8a8a" stroke="#8a8a8a" stroke-width="3" stroke-linejoin="round"/></svg>
<svg class="r" style="left:3654.0px;top:2036.0px" width="24.0" height="28.0" viewBox="0 0 24.0 28.0"><path d="M5.5 6 L15.5 13.5 L5.5 21Z" fill="#8a8a8a" stroke="#8a8a8a" stroke-width="3" stroke-linejoin="round"/></svg>
<div class="r" style="left:3708.2px;top:0.0px;width:1.2px;height:2141.0px;background:#e3e3e3;"></div>
<div class="r" style="left:3709.4px;top:0.0px;width:5.6px;height:2141.0px;background:#f8f8f8;"></div>
<div class="r" style="left:0.0px;top:2062.8px;width:3709.0px;height:72.6px;background:#f5f5f5;"></div>
<div class="r" style="left:0.0px;top:2135.3px;width:3708.2px;height:2.0px;background:#dedede;"></div>
<div class="r" style="left:0.0px;top:2137.2px;width:3708.2px;height:4.0px;background:#fff;"></div>
<div class="r" style="left:3614.0px;top:2137.2px;width:63.0px;height:4.0px;background:#f0f0f0;"></div>
<svg class="r" style="left:14.0px;top:2078.0px" width="30.0" height="40.0" viewBox="0 0 30.0 40.0"><path d="M18 8.5 L6.5 19.5 L18 30.5" fill="none" stroke="#c2c2c2" stroke-width="2.4" stroke-linecap="round" stroke-linejoin="round"/></svg>
<svg class="r" style="left:86.0px;top:2078.0px" width="30.0" height="40.0" viewBox="0 0 30.0 40.0"><path d="M9 8.5 L20.5 19.5 L9 30.5" fill="none" stroke="#c2c2c2" stroke-width="2.4" stroke-linecap="round" stroke-linejoin="round"/></svg>
<svg class="r" style="left:154.0px;top:2080.0px" width="36.0" height="36.0" viewBox="0 0 36.0 36.0"><path d="M4.5 8 H30.5 M4.5 18 H30.5 M4.5 28 H30.5" stroke="#424242" stroke-width="2.4" stroke-linecap="round"/></svg>
<div class="t" style="left:227.3px;top:2076.7px;font-size:31.5px;line-height:40px;letter-spacing:-0.73px;color:#424242;">Trial Balance vs. Budget</div>
<div class="r" style="left:226.8px;top:2129.3px;width:324.3px;height:5.2px;background:#3a7c4b;"></div>
<div class="t" style="left:592.5px;top:2076.7px;font-size:31.5px;line-height:40px;letter-spacing:-0.71px;color:#424242;">TrialBalanceBudgetData</div>
<svg class="r" style="left:958.0px;top:2080.0px" width="36.0" height="36.0" viewBox="0 0 36.0 36.0"><path d="M16 4 V28 M4 16 H28" stroke="#424242" stroke-width="2.4" stroke-linecap="round"/></svg>
</body></html>
